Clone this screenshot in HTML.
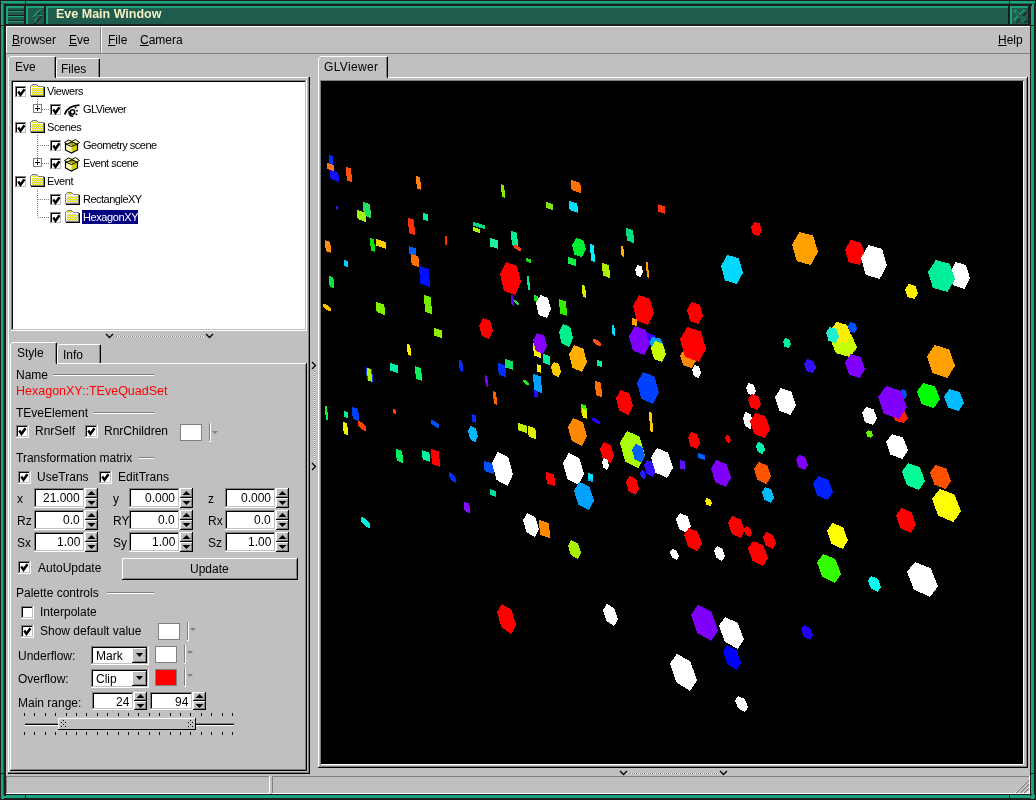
<!DOCTYPE html>
<html><head><meta charset="utf-8"><style>
html,body{margin:0;padding:0;}
body{width:1036px;height:800px;position:relative;overflow:hidden;background:#c0c0c0;font-family:"Liberation Sans",sans-serif;}
div,span,svg{position:absolute;}
.t{white-space:pre;line-height:1;will-change:transform;}
u{text-decoration:none;border-bottom:1px solid currentColor;}
</style></head><body>
<div style="left:0px;top:0px;width:1036px;height:800px;background:#18211e;"></div>
<div style="left:1px;top:1px;width:1034px;height:3px;background:#1fa27f;"></div>
<div style="left:1px;top:1px;width:3px;height:798px;background:#1fa27f;"></div>
<div style="left:1031px;top:1px;width:3px;height:798px;background:#1fa27f;"></div>
<div style="left:1px;top:795px;width:1034px;height:3px;background:#1fa27f;"></div>
<div style="left:4px;top:4px;width:1028px;height:2px;background:#18211e;"></div>
<div style="left:4px;top:4px;width:2px;height:792px;background:#18211e;"></div>
<div style="left:1030px;top:4px;width:1px;height:792px;background:#18211e;"></div>
<div style="left:4px;top:794px;width:1028px;height:1px;background:#18211e;"></div>
<div style="left:1px;top:3px;width:1034px;height:1px;background:#1a6e58;"></div>
<div style="left:3px;top:3px;width:1px;height:792px;background:#1a6e58;"></div>
<div style="left:25px;top:0px;width:1px;height:6px;background:#18211e;"></div>
<div style="left:25px;top:794px;width:1px;height:6px;background:#18211e;"></div>
<div style="left:1009px;top:0px;width:1px;height:6px;background:#18211e;"></div>
<div style="left:1009px;top:794px;width:1px;height:6px;background:#18211e;"></div>
<div style="left:0px;top:25px;width:6px;height:1px;background:#18211e;"></div>
<div style="left:1030px;top:25px;width:6px;height:1px;background:#18211e;"></div>
<div style="left:0px;top:773px;width:6px;height:1px;background:#18211e;"></div>
<div style="left:1030px;top:773px;width:6px;height:1px;background:#18211e;"></div>
<div style="left:6px;top:6px;width:20px;height:20px;background:#18211e;"></div>
<div style="left:6px;top:6px;width:18px;height:18px;background:#1f5c4e;"></div>
<div style="left:6px;top:6px;width:18px;height:2px;background:#1fa27f;"></div>
<div style="left:6px;top:6px;width:2px;height:18px;background:#1fa27f;"></div>
<div style="left:26px;top:6px;width:20px;height:20px;background:#18211e;"></div>
<div style="left:26px;top:6px;width:18px;height:18px;background:#1f5c4e;"></div>
<div style="left:26px;top:6px;width:18px;height:2px;background:#1fa27f;"></div>
<div style="left:26px;top:6px;width:2px;height:18px;background:#1fa27f;"></div>
<div style="left:46px;top:6px;width:964px;height:20px;background:#18211e;"></div>
<div style="left:46px;top:6px;width:962px;height:18px;background:#1f5c4e;"></div>
<div style="left:46px;top:6px;width:962px;height:2px;background:#1fa27f;"></div>
<div style="left:46px;top:6px;width:2px;height:18px;background:#1fa27f;"></div>
<div style="left:1010px;top:6px;width:20px;height:20px;background:#18211e;"></div>
<div style="left:1010px;top:6px;width:18px;height:18px;background:#1f5c4e;"></div>
<div style="left:1010px;top:6px;width:18px;height:2px;background:#1fa27f;"></div>
<div style="left:1010px;top:6px;width:2px;height:18px;background:#1fa27f;"></div>
<div style="left:8px;top:10px;width:16px;height:1px;background:#18211e;"></div>
<div style="left:8px;top:11px;width:16px;height:1px;background:#1fa27f;"></div>
<div style="left:8px;top:15px;width:16px;height:1px;background:#18211e;"></div>
<div style="left:8px;top:16px;width:16px;height:1px;background:#1fa27f;"></div>
<div style="left:8px;top:20px;width:16px;height:1px;background:#18211e;"></div>
<div style="left:8px;top:21px;width:16px;height:1px;background:#1fa27f;"></div>
<svg style="left:26px;top:6px" width="20" height="20"><path d="M6 11.5 L9.5 11.5 M13.5 4.5 L12.3 9.5 M15.5 10.5 L8 18" stroke="#18211e" stroke-width="1.1" fill="none"/><path d="M14.5 3.5 L6.5 11.5 M10.5 11.5 L8.8 16.5 M12.5 9.5 L16.5 9.5" stroke="#1fa27f" stroke-width="1.1" fill="none"/></svg>
<svg style="left:1010px;top:7px" width="20" height="20"><g fill="none" stroke-linecap="square"><path d="M6 5 L14.5 13.5 M14.5 5 L6 13.5" stroke="#18211e" stroke-width="3.2" transform="translate(0.6,0.6)"/><path d="M6 5 L14.5 13.5 M14.5 5 L6 13.5" stroke="#1fa27f" stroke-width="3.2" transform="translate(-0.6,-0.6)"/><path d="M6 5 L14.5 13.5 M14.5 5 L6 13.5" stroke="#1f5c4e" stroke-width="2"/></g></svg>
<span class="t" style="left:56px;top:8px;font-size:12.5px;color:#f4f0c4;font-weight:bold">Eve Main Window</span>
<div style="left:6px;top:26px;width:1024px;height:768px;background:#c0c0c0;"></div>
<div style="left:6px;top:26px;width:1024px;height:1px;background:#ffffff;"></div>
<div style="left:6px;top:26px;width:1px;height:27px;background:#ffffff;"></div>
<div style="left:6px;top:53px;width:1024px;height:1px;background:#808080;"></div>
<div style="left:100px;top:27px;width:1px;height:26px;background:#808080;"></div>
<div style="left:101px;top:27px;width:1px;height:26px;background:#ffffff;"></div>
<span class="t" style="left:12px;top:34px;font-size:12px;color:#000;"><span style="position:static;text-decoration:underline;text-underline-offset:1px">B</span>rowser</span>
<span class="t" style="left:69px;top:34px;font-size:12px;color:#000;"><span style="position:static;text-decoration:underline;text-underline-offset:1px">E</span>ve</span>
<span class="t" style="left:108px;top:34px;font-size:12px;color:#000;"><span style="position:static;text-decoration:underline;text-underline-offset:1px">F</span>ile</span>
<span class="t" style="left:140px;top:34px;font-size:12px;color:#000;"><span style="position:static;text-decoration:underline;text-underline-offset:1px">C</span>amera</span>
<span class="t" style="left:998px;top:34px;font-size:12px;color:#000;"><span style="position:static;text-decoration:underline;text-underline-offset:1px">H</span>elp</span>
<div style="left:8px;top:77px;width:1px;height:697px;background:#ffffff;"></div>
<div style="left:56px;top:58px;width:44px;height:20px;background:#c0c0c0;"></div>
<div style="left:58px;top:58px;width:41px;height:1px;background:#ffffff;"></div>
<div style="left:56px;top:60px;width:1px;height:18px;background:#ffffff;"></div>
<div style="left:57px;top:59px;width:1px;height:1px;background:#ffffff;"></div>
<div style="left:99px;top:59px;width:1px;height:19px;background:#000000;"></div>
<div style="left:98px;top:59px;width:1px;height:19px;background:#808080;"></div>
<span class="t" style="left:61px;top:63px;font-size:12px;color:#000;">Files</span>
<div style="left:8px;top:77px;width:301px;height:1px;background:#ffffff;"></div>
<div style="left:308px;top:77px;width:1px;height:697px;background:#808080;"></div>
<div style="left:309px;top:77px;width:1px;height:697px;background:#000000;"></div>
<div style="left:8px;top:773px;width:302px;height:1px;background:#000000;"></div>
<div style="left:8px;top:772px;width:301px;height:1px;background:#808080;"></div>
<div style="left:8px;top:56px;width:48px;height:22px;background:#c0c0c0;"></div>
<div style="left:10px;top:56px;width:45px;height:1px;background:#ffffff;"></div>
<div style="left:8px;top:58px;width:1px;height:20px;background:#ffffff;"></div>
<div style="left:9px;top:57px;width:1px;height:1px;background:#ffffff;"></div>
<div style="left:55px;top:57px;width:1px;height:21px;background:#000000;"></div>
<div style="left:54px;top:57px;width:1px;height:21px;background:#808080;"></div>
<span class="t" style="left:15px;top:61px;font-size:12px;color:#000;">Eve</span>
<div style="left:9px;top:77px;width:46px;height:1px;background:#c0c0c0;"></div>
<div style="left:11px;top:80px;width:296px;height:251px;background:#ffffff;"></div>
<div style="left:11px;top:80px;width:295px;height:1px;background:#808080;"></div>
<div style="left:11px;top:80px;width:1px;height:250px;background:#808080;"></div>
<div style="left:12px;top:81px;width:293px;height:1px;background:#000000;"></div>
<div style="left:12px;top:81px;width:1px;height:248px;background:#000000;"></div>
<div style="left:11px;top:330px;width:296px;height:1px;background:#ffffff;"></div>
<div style="left:306px;top:80px;width:1px;height:251px;background:#ffffff;"></div>
<div style="left:12px;top:329px;width:294px;height:1px;background:#c0c0c0;"></div>
<div style="left:305px;top:81px;width:1px;height:249px;background:#c0c0c0;"></div>
<div style="left:15px;top:86px;width:12px;height:12px;background:#ffffff;"></div>
<div style="left:15px;top:86px;width:11px;height:1px;background:#808080;"></div>
<div style="left:15px;top:86px;width:1px;height:11px;background:#808080;"></div>
<div style="left:16px;top:87px;width:9px;height:1px;background:#000000;"></div>
<div style="left:16px;top:87px;width:1px;height:9px;background:#000000;"></div>
<div style="left:15px;top:97px;width:12px;height:1px;background:#ffffff;"></div>
<div style="left:26px;top:86px;width:1px;height:12px;background:#ffffff;"></div>
<div style="left:16px;top:96px;width:10px;height:1px;background:#c0c0c0;"></div>
<div style="left:25px;top:87px;width:1px;height:10px;background:#c0c0c0;"></div>
<svg style="left:15px;top:86px" width="12" height="12"><path d="M3.3 5.5 L5.5 8.8 L9.5 3.2" stroke="#000" stroke-width="2.4" fill="none"/></svg>
<svg style="left:30px;top:84px" width="16" height="14" shape-rendering="crispEdges"><defs><pattern id="ck" width="2" height="2" patternUnits="userSpaceOnUse"><rect width="2" height="2" fill="#c8c8b0"/><rect width="1" height="1" fill="#ffff00"/><rect x="1" y="1" width="1" height="1" fill="#ffff00"/></pattern></defs><rect x="2" y="0" width="5" height="1" fill="#808080"/><rect x="1" y="1" width="1" height="1" fill="#808080"/><rect x="7" y="1" width="1" height="1" fill="#808080"/><rect x="0" y="2" width="1" height="10" fill="#808080"/><rect x="8" y="2" width="6" height="1" fill="#808080"/><rect x="13" y="2" width="1" height="10" fill="#808080"/><rect x="0" y="11" width="14" height="1" fill="#808080"/><rect x="1" y="12" width="14" height="1" fill="#000"/><rect x="14" y="3" width="1" height="10" fill="#000"/><rect x="2" y="1" width="5" height="2" fill="url(#ck)"/><rect x="1" y="3" width="12" height="8" fill="#fff"/><rect x="2" y="4" width="11" height="7" fill="url(#ck)"/></svg>
<span class="t" style="left:47px;top:86px;font-size:11px;color:#000;letter-spacing:-0.4px">Viewers</span>
<div style="left:50px;top:104px;width:12px;height:12px;background:#ffffff;"></div>
<div style="left:50px;top:104px;width:11px;height:1px;background:#808080;"></div>
<div style="left:50px;top:104px;width:1px;height:11px;background:#808080;"></div>
<div style="left:51px;top:105px;width:9px;height:1px;background:#000000;"></div>
<div style="left:51px;top:105px;width:1px;height:9px;background:#000000;"></div>
<div style="left:50px;top:115px;width:12px;height:1px;background:#ffffff;"></div>
<div style="left:61px;top:104px;width:1px;height:12px;background:#ffffff;"></div>
<div style="left:51px;top:114px;width:10px;height:1px;background:#c0c0c0;"></div>
<div style="left:60px;top:105px;width:1px;height:10px;background:#c0c0c0;"></div>
<svg style="left:50px;top:104px" width="12" height="12"><path d="M3.3 5.5 L5.5 8.8 L9.5 3.2" stroke="#000" stroke-width="2.4" fill="none"/></svg>
<svg style="left:64px;top:104px" width="17" height="15"><path d="M0.6 10.5 Q4 1.5 15.5 1.2" stroke="#000" stroke-width="1.7" fill="none"/><circle cx="8.5" cy="8" r="2.2" stroke="#000" stroke-width="1.5" fill="#fff"/><path d="M5 7 Q4.6 12.3 9.3 12.3" stroke="#000" stroke-width="1.4" fill="none"/><rect x="10.7" y="2.8" width="1.6" height="1.6" fill="#000"/><rect x="12.2" y="5.9" width="1.6" height="1.6" fill="#000"/><rect x="11.6" y="9.5" width="1.6" height="1.6" fill="#000"/></svg>
<span class="t" style="left:83px;top:104px;font-size:11px;color:#000;letter-spacing:-0.5px">GLViewer</span>
<div style="left:38px;top:109px;width:11px;height:1px;background:repeating-linear-gradient(90deg,#808080 0 1px,transparent 1px 2px)"></div>
<div style="left:33px;top:104px;width:9px;height:9px;background:#808080;"></div>
<div style="left:34px;top:105px;width:7px;height:7px;background:#ffffff;"></div>
<div style="left:35px;top:108px;width:5px;height:1px;background:#000000;"></div>
<div style="left:37px;top:106px;width:1px;height:5px;background:#000000;"></div>
<div style="left:15px;top:122px;width:12px;height:12px;background:#ffffff;"></div>
<div style="left:15px;top:122px;width:11px;height:1px;background:#808080;"></div>
<div style="left:15px;top:122px;width:1px;height:11px;background:#808080;"></div>
<div style="left:16px;top:123px;width:9px;height:1px;background:#000000;"></div>
<div style="left:16px;top:123px;width:1px;height:9px;background:#000000;"></div>
<div style="left:15px;top:133px;width:12px;height:1px;background:#ffffff;"></div>
<div style="left:26px;top:122px;width:1px;height:12px;background:#ffffff;"></div>
<div style="left:16px;top:132px;width:10px;height:1px;background:#c0c0c0;"></div>
<div style="left:25px;top:123px;width:1px;height:10px;background:#c0c0c0;"></div>
<svg style="left:15px;top:122px" width="12" height="12"><path d="M3.3 5.5 L5.5 8.8 L9.5 3.2" stroke="#000" stroke-width="2.4" fill="none"/></svg>
<svg style="left:30px;top:120px" width="16" height="14" shape-rendering="crispEdges"><defs><pattern id="ck" width="2" height="2" patternUnits="userSpaceOnUse"><rect width="2" height="2" fill="#c8c8b0"/><rect width="1" height="1" fill="#ffff00"/><rect x="1" y="1" width="1" height="1" fill="#ffff00"/></pattern></defs><rect x="2" y="0" width="5" height="1" fill="#808080"/><rect x="1" y="1" width="1" height="1" fill="#808080"/><rect x="7" y="1" width="1" height="1" fill="#808080"/><rect x="0" y="2" width="1" height="10" fill="#808080"/><rect x="8" y="2" width="6" height="1" fill="#808080"/><rect x="13" y="2" width="1" height="10" fill="#808080"/><rect x="0" y="11" width="14" height="1" fill="#808080"/><rect x="1" y="12" width="14" height="1" fill="#000"/><rect x="14" y="3" width="1" height="10" fill="#000"/><rect x="2" y="1" width="5" height="2" fill="url(#ck)"/><rect x="1" y="3" width="12" height="8" fill="#fff"/><rect x="2" y="4" width="11" height="7" fill="url(#ck)"/></svg>
<span class="t" style="left:47px;top:122px;font-size:11px;color:#000;letter-spacing:-0.4px">Scenes</span>
<div style="left:50px;top:140px;width:12px;height:12px;background:#ffffff;"></div>
<div style="left:50px;top:140px;width:11px;height:1px;background:#808080;"></div>
<div style="left:50px;top:140px;width:1px;height:11px;background:#808080;"></div>
<div style="left:51px;top:141px;width:9px;height:1px;background:#000000;"></div>
<div style="left:51px;top:141px;width:1px;height:9px;background:#000000;"></div>
<div style="left:50px;top:151px;width:12px;height:1px;background:#ffffff;"></div>
<div style="left:61px;top:140px;width:1px;height:12px;background:#ffffff;"></div>
<div style="left:51px;top:150px;width:10px;height:1px;background:#c0c0c0;"></div>
<div style="left:60px;top:141px;width:1px;height:10px;background:#c0c0c0;"></div>
<svg style="left:50px;top:140px" width="12" height="12"><path d="M3.3 5.5 L5.5 8.8 L9.5 3.2" stroke="#000" stroke-width="2.4" fill="none"/></svg>
<svg style="left:64px;top:137px" width="17" height="17"><path d="M2 6 L8 3.5 L14 6 L8 8.5 Z" fill="#a0a000"/><path d="M1.5 6.5 L1.5 13 L7.5 16 L7.5 8.5 Z" fill="#ffffc0"/><path d="M7.5 8.5 L7.5 16 L13.5 13 L13.5 6.5 Z" fill="#d0d000"/><path d="M1.5 6 L1.5 13 L7.5 16 L13.5 13 L13.5 6" stroke="#000" stroke-width="1.2" fill="none"/><path d="M1.5 7 L7.5 9.5 L13.5 7" stroke="#000" stroke-width="1" fill="none"/><path d="M0.5 5.5 L4.5 3 L8 4.5 L11.5 2.5 L15.5 5.5 L13 7 L8 4.8 L3 7 Z" fill="#fff8b0" stroke="#000" stroke-width="1"/></svg>
<span class="t" style="left:83px;top:140px;font-size:11px;color:#000;letter-spacing:-0.5px">Geometry scene</span>
<div style="left:38px;top:145px;width:11px;height:1px;background:repeating-linear-gradient(90deg,#808080 0 1px,transparent 1px 2px)"></div>
<div style="left:50px;top:158px;width:12px;height:12px;background:#ffffff;"></div>
<div style="left:50px;top:158px;width:11px;height:1px;background:#808080;"></div>
<div style="left:50px;top:158px;width:1px;height:11px;background:#808080;"></div>
<div style="left:51px;top:159px;width:9px;height:1px;background:#000000;"></div>
<div style="left:51px;top:159px;width:1px;height:9px;background:#000000;"></div>
<div style="left:50px;top:169px;width:12px;height:1px;background:#ffffff;"></div>
<div style="left:61px;top:158px;width:1px;height:12px;background:#ffffff;"></div>
<div style="left:51px;top:168px;width:10px;height:1px;background:#c0c0c0;"></div>
<div style="left:60px;top:159px;width:1px;height:10px;background:#c0c0c0;"></div>
<svg style="left:50px;top:158px" width="12" height="12"><path d="M3.3 5.5 L5.5 8.8 L9.5 3.2" stroke="#000" stroke-width="2.4" fill="none"/></svg>
<svg style="left:64px;top:155px" width="17" height="17"><path d="M2 6 L8 3.5 L14 6 L8 8.5 Z" fill="#a0a000"/><path d="M1.5 6.5 L1.5 13 L7.5 16 L7.5 8.5 Z" fill="#ffffc0"/><path d="M7.5 8.5 L7.5 16 L13.5 13 L13.5 6.5 Z" fill="#d0d000"/><path d="M1.5 6 L1.5 13 L7.5 16 L13.5 13 L13.5 6" stroke="#000" stroke-width="1.2" fill="none"/><path d="M1.5 7 L7.5 9.5 L13.5 7" stroke="#000" stroke-width="1" fill="none"/><path d="M0.5 5.5 L4.5 3 L8 4.5 L11.5 2.5 L15.5 5.5 L13 7 L8 4.8 L3 7 Z" fill="#fff8b0" stroke="#000" stroke-width="1"/></svg>
<span class="t" style="left:83px;top:158px;font-size:11px;color:#000;letter-spacing:-0.5px">Event scene</span>
<div style="left:38px;top:163px;width:11px;height:1px;background:repeating-linear-gradient(90deg,#808080 0 1px,transparent 1px 2px)"></div>
<div style="left:33px;top:158px;width:9px;height:9px;background:#808080;"></div>
<div style="left:34px;top:159px;width:7px;height:7px;background:#ffffff;"></div>
<div style="left:35px;top:162px;width:5px;height:1px;background:#000000;"></div>
<div style="left:37px;top:160px;width:1px;height:5px;background:#000000;"></div>
<div style="left:15px;top:176px;width:12px;height:12px;background:#ffffff;"></div>
<div style="left:15px;top:176px;width:11px;height:1px;background:#808080;"></div>
<div style="left:15px;top:176px;width:1px;height:11px;background:#808080;"></div>
<div style="left:16px;top:177px;width:9px;height:1px;background:#000000;"></div>
<div style="left:16px;top:177px;width:1px;height:9px;background:#000000;"></div>
<div style="left:15px;top:187px;width:12px;height:1px;background:#ffffff;"></div>
<div style="left:26px;top:176px;width:1px;height:12px;background:#ffffff;"></div>
<div style="left:16px;top:186px;width:10px;height:1px;background:#c0c0c0;"></div>
<div style="left:25px;top:177px;width:1px;height:10px;background:#c0c0c0;"></div>
<svg style="left:15px;top:176px" width="12" height="12"><path d="M3.3 5.5 L5.5 8.8 L9.5 3.2" stroke="#000" stroke-width="2.4" fill="none"/></svg>
<svg style="left:30px;top:174px" width="16" height="14" shape-rendering="crispEdges"><defs><pattern id="ck" width="2" height="2" patternUnits="userSpaceOnUse"><rect width="2" height="2" fill="#c8c8b0"/><rect width="1" height="1" fill="#ffff00"/><rect x="1" y="1" width="1" height="1" fill="#ffff00"/></pattern></defs><rect x="2" y="0" width="5" height="1" fill="#808080"/><rect x="1" y="1" width="1" height="1" fill="#808080"/><rect x="7" y="1" width="1" height="1" fill="#808080"/><rect x="0" y="2" width="1" height="10" fill="#808080"/><rect x="8" y="2" width="6" height="1" fill="#808080"/><rect x="13" y="2" width="1" height="10" fill="#808080"/><rect x="0" y="11" width="14" height="1" fill="#808080"/><rect x="1" y="12" width="14" height="1" fill="#000"/><rect x="14" y="3" width="1" height="10" fill="#000"/><rect x="2" y="1" width="5" height="2" fill="url(#ck)"/><rect x="1" y="3" width="12" height="8" fill="#fff"/><rect x="2" y="4" width="11" height="7" fill="url(#ck)"/></svg>
<span class="t" style="left:47px;top:176px;font-size:11px;color:#000;letter-spacing:-0.4px">Event</span>
<div style="left:50px;top:194px;width:12px;height:12px;background:#ffffff;"></div>
<div style="left:50px;top:194px;width:11px;height:1px;background:#808080;"></div>
<div style="left:50px;top:194px;width:1px;height:11px;background:#808080;"></div>
<div style="left:51px;top:195px;width:9px;height:1px;background:#000000;"></div>
<div style="left:51px;top:195px;width:1px;height:9px;background:#000000;"></div>
<div style="left:50px;top:205px;width:12px;height:1px;background:#ffffff;"></div>
<div style="left:61px;top:194px;width:1px;height:12px;background:#ffffff;"></div>
<div style="left:51px;top:204px;width:10px;height:1px;background:#c0c0c0;"></div>
<div style="left:60px;top:195px;width:1px;height:10px;background:#c0c0c0;"></div>
<svg style="left:50px;top:194px" width="12" height="12"><path d="M3.3 5.5 L5.5 8.8 L9.5 3.2" stroke="#000" stroke-width="2.4" fill="none"/></svg>
<svg style="left:65px;top:192px" width="16" height="14" shape-rendering="crispEdges"><defs><pattern id="ck" width="2" height="2" patternUnits="userSpaceOnUse"><rect width="2" height="2" fill="#c8c8b0"/><rect width="1" height="1" fill="#ffff00"/><rect x="1" y="1" width="1" height="1" fill="#ffff00"/></pattern></defs><rect x="2" y="0" width="5" height="1" fill="#808080"/><rect x="1" y="1" width="1" height="1" fill="#808080"/><rect x="7" y="1" width="1" height="1" fill="#808080"/><rect x="0" y="2" width="1" height="10" fill="#808080"/><rect x="8" y="2" width="6" height="1" fill="#808080"/><rect x="13" y="2" width="1" height="10" fill="#808080"/><rect x="0" y="11" width="14" height="1" fill="#808080"/><rect x="1" y="12" width="14" height="1" fill="#000"/><rect x="14" y="3" width="1" height="10" fill="#000"/><rect x="2" y="1" width="5" height="2" fill="url(#ck)"/><rect x="1" y="3" width="12" height="8" fill="#fff"/><rect x="2" y="4" width="11" height="7" fill="url(#ck)"/></svg>
<span class="t" style="left:83px;top:194px;font-size:11px;color:#000;letter-spacing:-0.5px">RectangleXY</span>
<div style="left:38px;top:199px;width:11px;height:1px;background:repeating-linear-gradient(90deg,#808080 0 1px,transparent 1px 2px)"></div>
<div style="left:50px;top:212px;width:12px;height:12px;background:#ffffff;"></div>
<div style="left:50px;top:212px;width:11px;height:1px;background:#808080;"></div>
<div style="left:50px;top:212px;width:1px;height:11px;background:#808080;"></div>
<div style="left:51px;top:213px;width:9px;height:1px;background:#000000;"></div>
<div style="left:51px;top:213px;width:1px;height:9px;background:#000000;"></div>
<div style="left:50px;top:223px;width:12px;height:1px;background:#ffffff;"></div>
<div style="left:61px;top:212px;width:1px;height:12px;background:#ffffff;"></div>
<div style="left:51px;top:222px;width:10px;height:1px;background:#c0c0c0;"></div>
<div style="left:60px;top:213px;width:1px;height:10px;background:#c0c0c0;"></div>
<svg style="left:50px;top:212px" width="12" height="12"><path d="M3.3 5.5 L5.5 8.8 L9.5 3.2" stroke="#000" stroke-width="2.4" fill="none"/></svg>
<svg style="left:65px;top:210px" width="16" height="14" shape-rendering="crispEdges"><defs><pattern id="ck" width="2" height="2" patternUnits="userSpaceOnUse"><rect width="2" height="2" fill="#c8c8b0"/><rect width="1" height="1" fill="#ffff00"/><rect x="1" y="1" width="1" height="1" fill="#ffff00"/></pattern></defs><rect x="2" y="0" width="5" height="1" fill="#808080"/><rect x="1" y="1" width="1" height="1" fill="#808080"/><rect x="7" y="1" width="1" height="1" fill="#808080"/><rect x="0" y="2" width="1" height="10" fill="#808080"/><rect x="8" y="2" width="6" height="1" fill="#808080"/><rect x="13" y="2" width="1" height="10" fill="#808080"/><rect x="0" y="11" width="14" height="1" fill="#808080"/><rect x="1" y="12" width="14" height="1" fill="#000"/><rect x="14" y="3" width="1" height="10" fill="#000"/><rect x="2" y="1" width="5" height="2" fill="url(#ck)"/><rect x="1" y="3" width="12" height="8" fill="#fff"/><rect x="2" y="4" width="11" height="7" fill="url(#ck)"/></svg>
<div style="left:82px;top:210px;width:56px;height:14px;background:#000080;"></div>
<span class="t" style="left:83px;top:212px;font-size:11px;color:#fff;letter-spacing:-0.4px">HexagonXY</span>
<div style="left:38px;top:217px;width:11px;height:1px;background:repeating-linear-gradient(90deg,#808080 0 1px,transparent 1px 2px)"></div>
<div style="left:37px;top:99px;width:1px;height:10px;background:repeating-linear-gradient(180deg,#808080 0 1px,transparent 1px 2px)"></div>
<div style="left:37px;top:135px;width:1px;height:28px;background:repeating-linear-gradient(180deg,#808080 0 1px,transparent 1px 2px)"></div>
<div style="left:37px;top:189px;width:1px;height:28px;background:repeating-linear-gradient(180deg,#808080 0 1px,transparent 1px 2px)"></div>
<svg style="left:105px;top:333px" width="9" height="6"><path d="M1 1 L4.5 4.5 L8 1" stroke="#000" stroke-width="1.3" fill="none"/></svg>
<svg style="left:205px;top:333px" width="9" height="6"><path d="M1 1 L4.5 4.5 L8 1" stroke="#000" stroke-width="1.3" fill="none"/></svg>
<div style="left:116px;top:336px;width:88px;height:1px;background:repeating-linear-gradient(90deg,#808080 0 1px,#fff 1px 2px)"></div>
<div style="left:57px;top:344px;width:44px;height:20px;background:#c0c0c0;"></div>
<div style="left:59px;top:344px;width:41px;height:1px;background:#ffffff;"></div>
<div style="left:57px;top:346px;width:1px;height:18px;background:#ffffff;"></div>
<div style="left:58px;top:345px;width:1px;height:1px;background:#ffffff;"></div>
<div style="left:100px;top:345px;width:1px;height:19px;background:#000000;"></div>
<div style="left:99px;top:345px;width:1px;height:19px;background:#808080;"></div>
<span class="t" style="left:63px;top:349px;font-size:12px;color:#000;">Info</span>
<div style="left:10px;top:363px;width:297px;height:1px;background:#ffffff;"></div>
<div style="left:10px;top:363px;width:1px;height:408px;background:#ffffff;"></div>
<div style="left:306px;top:363px;width:1px;height:408px;background:#000000;"></div>
<div style="left:305px;top:364px;width:1px;height:406px;background:#808080;"></div>
<div style="left:10px;top:770px;width:297px;height:1px;background:#000000;"></div>
<div style="left:11px;top:769px;width:295px;height:1px;background:#808080;"></div>
<div style="left:10px;top:342px;width:47px;height:22px;background:#c0c0c0;"></div>
<div style="left:12px;top:342px;width:44px;height:1px;background:#ffffff;"></div>
<div style="left:10px;top:344px;width:1px;height:20px;background:#ffffff;"></div>
<div style="left:11px;top:343px;width:1px;height:1px;background:#ffffff;"></div>
<div style="left:56px;top:343px;width:1px;height:21px;background:#000000;"></div>
<div style="left:55px;top:343px;width:1px;height:21px;background:#808080;"></div>
<span class="t" style="left:17px;top:347px;font-size:12px;color:#000;">Style</span>
<div style="left:11px;top:363px;width:45px;height:1px;background:#c0c0c0;"></div>
<span class="t" style="left:16px;top:369px;font-size:12px;color:#000;">Name</span>
<div style="left:53px;top:374px;width:101px;height:1px;background:#808080;"></div>
<div style="left:53px;top:375px;width:101px;height:1px;background:#ffffff;"></div>
<span class="t" style="left:16px;top:385px;font-size:12.5px;color:#ff0000;">HexagonXY::TEveQuadSet</span>
<span class="t" style="left:16px;top:407px;font-size:12px;color:#000;">TEveElement</span>
<div style="left:94px;top:412px;width:60px;height:1px;background:#808080;"></div>
<div style="left:94px;top:413px;width:60px;height:1px;background:#ffffff;"></div>
<div style="left:16px;top:425px;width:13px;height:13px;background:#ffffff;"></div>
<div style="left:16px;top:425px;width:12px;height:1px;background:#808080;"></div>
<div style="left:16px;top:425px;width:1px;height:12px;background:#808080;"></div>
<div style="left:17px;top:426px;width:10px;height:1px;background:#000000;"></div>
<div style="left:17px;top:426px;width:1px;height:10px;background:#000000;"></div>
<div style="left:16px;top:437px;width:13px;height:1px;background:#ffffff;"></div>
<div style="left:28px;top:425px;width:1px;height:13px;background:#ffffff;"></div>
<div style="left:17px;top:436px;width:11px;height:1px;background:#c0c0c0;"></div>
<div style="left:27px;top:426px;width:1px;height:11px;background:#c0c0c0;"></div>
<svg style="left:16px;top:425px" width="13" height="13"><path d="M3.3 5.5 L5.5 8.8 L9.5 3.2" stroke="#000" stroke-width="2.4" fill="none"/></svg>
<span class="t" style="left:35px;top:425px;font-size:12px;color:#000;">RnrSelf</span>
<div style="left:85px;top:425px;width:13px;height:13px;background:#ffffff;"></div>
<div style="left:85px;top:425px;width:12px;height:1px;background:#808080;"></div>
<div style="left:85px;top:425px;width:1px;height:12px;background:#808080;"></div>
<div style="left:86px;top:426px;width:10px;height:1px;background:#000000;"></div>
<div style="left:86px;top:426px;width:1px;height:10px;background:#000000;"></div>
<div style="left:85px;top:437px;width:13px;height:1px;background:#ffffff;"></div>
<div style="left:97px;top:425px;width:1px;height:13px;background:#ffffff;"></div>
<div style="left:86px;top:436px;width:11px;height:1px;background:#c0c0c0;"></div>
<div style="left:96px;top:426px;width:1px;height:11px;background:#c0c0c0;"></div>
<svg style="left:85px;top:425px" width="13" height="13"><path d="M3.3 5.5 L5.5 8.8 L9.5 3.2" stroke="#000" stroke-width="2.4" fill="none"/></svg>
<span class="t" style="left:104px;top:425px;font-size:12px;color:#000;">RnrChildren</span>
<div style="left:180px;top:424px;width:22px;height:17px;background:#808080;"></div>
<div style="left:181px;top:425px;width:20px;height:15px;background:#ffffff;"></div>
<div style="left:209px;top:423px;width:1px;height:18px;background:#808080;"></div>
<div style="left:210px;top:423px;width:1px;height:18px;background:#ffffff;"></div>
<div style="left:209px;top:441px;width:2px;height:1px;background:#ffffff;"></div>
<svg style="left:212px;top:431px" width="6" height="4"><path d="M0 0 L6 0 L3 3Z" fill="#808080"/></svg>
<span class="t" style="left:16px;top:452px;font-size:12px;color:#000;">Transformation matrix</span>
<div style="left:138px;top:457px;width:16px;height:1px;background:#808080;"></div>
<div style="left:138px;top:458px;width:16px;height:1px;background:#ffffff;"></div>
<div style="left:18px;top:471px;width:13px;height:13px;background:#ffffff;"></div>
<div style="left:18px;top:471px;width:12px;height:1px;background:#808080;"></div>
<div style="left:18px;top:471px;width:1px;height:12px;background:#808080;"></div>
<div style="left:19px;top:472px;width:10px;height:1px;background:#000000;"></div>
<div style="left:19px;top:472px;width:1px;height:10px;background:#000000;"></div>
<div style="left:18px;top:483px;width:13px;height:1px;background:#ffffff;"></div>
<div style="left:30px;top:471px;width:1px;height:13px;background:#ffffff;"></div>
<div style="left:19px;top:482px;width:11px;height:1px;background:#c0c0c0;"></div>
<div style="left:29px;top:472px;width:1px;height:11px;background:#c0c0c0;"></div>
<svg style="left:18px;top:471px" width="13" height="13"><path d="M3.3 5.5 L5.5 8.8 L9.5 3.2" stroke="#000" stroke-width="2.4" fill="none"/></svg>
<span class="t" style="left:37px;top:471px;font-size:12px;color:#000;">UseTrans</span>
<div style="left:99px;top:471px;width:13px;height:13px;background:#ffffff;"></div>
<div style="left:99px;top:471px;width:12px;height:1px;background:#808080;"></div>
<div style="left:99px;top:471px;width:1px;height:12px;background:#808080;"></div>
<div style="left:100px;top:472px;width:10px;height:1px;background:#000000;"></div>
<div style="left:100px;top:472px;width:1px;height:10px;background:#000000;"></div>
<div style="left:99px;top:483px;width:13px;height:1px;background:#ffffff;"></div>
<div style="left:111px;top:471px;width:1px;height:13px;background:#ffffff;"></div>
<div style="left:100px;top:482px;width:11px;height:1px;background:#c0c0c0;"></div>
<div style="left:110px;top:472px;width:1px;height:11px;background:#c0c0c0;"></div>
<svg style="left:99px;top:471px" width="13" height="13"><path d="M3.3 5.5 L5.5 8.8 L9.5 3.2" stroke="#000" stroke-width="2.4" fill="none"/></svg>
<span class="t" style="left:118px;top:471px;font-size:12px;color:#000;">EditTrans</span>
<span class="t" style="left:17px;top:493px;font-size:12px;color:#000;">x</span>
<div style="left:34px;top:488px;width:51px;height:20px;background:#ffffff;"></div>
<div style="left:34px;top:488px;width:50px;height:1px;background:#808080;"></div>
<div style="left:34px;top:488px;width:1px;height:19px;background:#808080;"></div>
<div style="left:35px;top:489px;width:48px;height:1px;background:#000000;"></div>
<div style="left:35px;top:489px;width:1px;height:17px;background:#000000;"></div>
<div style="left:34px;top:507px;width:51px;height:1px;background:#ffffff;"></div>
<div style="left:84px;top:488px;width:1px;height:20px;background:#ffffff;"></div>
<div style="left:35px;top:506px;width:49px;height:1px;background:#c0c0c0;"></div>
<div style="left:83px;top:489px;width:1px;height:18px;background:#c0c0c0;"></div>
<span class="t" style="right:956px;top:492px;font-size:12px">21.000</span>
<div style="left:85px;top:488px;width:13px;height:10px;background:#c0c0c0;"></div>
<div style="left:85px;top:488px;width:12px;height:1px;background:#ffffff;"></div>
<div style="left:85px;top:488px;width:1px;height:9px;background:#ffffff;"></div>
<div style="left:86px;top:496px;width:11px;height:1px;background:#808080;"></div>
<div style="left:96px;top:489px;width:1px;height:8px;background:#808080;"></div>
<div style="left:85px;top:497px;width:13px;height:1px;background:#000000;"></div>
<div style="left:97px;top:488px;width:1px;height:10px;background:#000000;"></div>
<div style="left:85px;top:498px;width:13px;height:10px;background:#c0c0c0;"></div>
<div style="left:85px;top:498px;width:12px;height:1px;background:#ffffff;"></div>
<div style="left:85px;top:498px;width:1px;height:9px;background:#ffffff;"></div>
<div style="left:86px;top:506px;width:11px;height:1px;background:#808080;"></div>
<div style="left:96px;top:499px;width:1px;height:8px;background:#808080;"></div>
<div style="left:85px;top:507px;width:13px;height:1px;background:#000000;"></div>
<div style="left:97px;top:498px;width:1px;height:10px;background:#000000;"></div>
<svg style="left:85px;top:488px" width="13" height="20"><path d="M2.5 7 L10.5 7 L6.5 3Z" fill="#000"/><path d="M2.5 13 L10.5 13 L6.5 17Z" fill="#000"/></svg>
<span class="t" style="left:113px;top:493px;font-size:12px;color:#000;">y</span>
<div style="left:129px;top:488px;width:51px;height:20px;background:#ffffff;"></div>
<div style="left:129px;top:488px;width:50px;height:1px;background:#808080;"></div>
<div style="left:129px;top:488px;width:1px;height:19px;background:#808080;"></div>
<div style="left:130px;top:489px;width:48px;height:1px;background:#000000;"></div>
<div style="left:130px;top:489px;width:1px;height:17px;background:#000000;"></div>
<div style="left:129px;top:507px;width:51px;height:1px;background:#ffffff;"></div>
<div style="left:179px;top:488px;width:1px;height:20px;background:#ffffff;"></div>
<div style="left:130px;top:506px;width:49px;height:1px;background:#c0c0c0;"></div>
<div style="left:178px;top:489px;width:1px;height:18px;background:#c0c0c0;"></div>
<span class="t" style="right:861px;top:492px;font-size:12px">0.000</span>
<div style="left:180px;top:488px;width:13px;height:10px;background:#c0c0c0;"></div>
<div style="left:180px;top:488px;width:12px;height:1px;background:#ffffff;"></div>
<div style="left:180px;top:488px;width:1px;height:9px;background:#ffffff;"></div>
<div style="left:181px;top:496px;width:11px;height:1px;background:#808080;"></div>
<div style="left:191px;top:489px;width:1px;height:8px;background:#808080;"></div>
<div style="left:180px;top:497px;width:13px;height:1px;background:#000000;"></div>
<div style="left:192px;top:488px;width:1px;height:10px;background:#000000;"></div>
<div style="left:180px;top:498px;width:13px;height:10px;background:#c0c0c0;"></div>
<div style="left:180px;top:498px;width:12px;height:1px;background:#ffffff;"></div>
<div style="left:180px;top:498px;width:1px;height:9px;background:#ffffff;"></div>
<div style="left:181px;top:506px;width:11px;height:1px;background:#808080;"></div>
<div style="left:191px;top:499px;width:1px;height:8px;background:#808080;"></div>
<div style="left:180px;top:507px;width:13px;height:1px;background:#000000;"></div>
<div style="left:192px;top:498px;width:1px;height:10px;background:#000000;"></div>
<svg style="left:180px;top:488px" width="13" height="20"><path d="M2.5 7 L10.5 7 L6.5 3Z" fill="#000"/><path d="M2.5 13 L10.5 13 L6.5 17Z" fill="#000"/></svg>
<span class="t" style="left:208px;top:493px;font-size:12px;color:#000;">z</span>
<div style="left:225px;top:488px;width:51px;height:20px;background:#ffffff;"></div>
<div style="left:225px;top:488px;width:50px;height:1px;background:#808080;"></div>
<div style="left:225px;top:488px;width:1px;height:19px;background:#808080;"></div>
<div style="left:226px;top:489px;width:48px;height:1px;background:#000000;"></div>
<div style="left:226px;top:489px;width:1px;height:17px;background:#000000;"></div>
<div style="left:225px;top:507px;width:51px;height:1px;background:#ffffff;"></div>
<div style="left:275px;top:488px;width:1px;height:20px;background:#ffffff;"></div>
<div style="left:226px;top:506px;width:49px;height:1px;background:#c0c0c0;"></div>
<div style="left:274px;top:489px;width:1px;height:18px;background:#c0c0c0;"></div>
<span class="t" style="right:765px;top:492px;font-size:12px">0.000</span>
<div style="left:276px;top:488px;width:13px;height:10px;background:#c0c0c0;"></div>
<div style="left:276px;top:488px;width:12px;height:1px;background:#ffffff;"></div>
<div style="left:276px;top:488px;width:1px;height:9px;background:#ffffff;"></div>
<div style="left:277px;top:496px;width:11px;height:1px;background:#808080;"></div>
<div style="left:287px;top:489px;width:1px;height:8px;background:#808080;"></div>
<div style="left:276px;top:497px;width:13px;height:1px;background:#000000;"></div>
<div style="left:288px;top:488px;width:1px;height:10px;background:#000000;"></div>
<div style="left:276px;top:498px;width:13px;height:10px;background:#c0c0c0;"></div>
<div style="left:276px;top:498px;width:12px;height:1px;background:#ffffff;"></div>
<div style="left:276px;top:498px;width:1px;height:9px;background:#ffffff;"></div>
<div style="left:277px;top:506px;width:11px;height:1px;background:#808080;"></div>
<div style="left:287px;top:499px;width:1px;height:8px;background:#808080;"></div>
<div style="left:276px;top:507px;width:13px;height:1px;background:#000000;"></div>
<div style="left:288px;top:498px;width:1px;height:10px;background:#000000;"></div>
<svg style="left:276px;top:488px" width="13" height="20"><path d="M2.5 7 L10.5 7 L6.5 3Z" fill="#000"/><path d="M2.5 13 L10.5 13 L6.5 17Z" fill="#000"/></svg>
<span class="t" style="left:17px;top:515px;font-size:12px;color:#000;">Rz</span>
<div style="left:34px;top:510px;width:51px;height:20px;background:#ffffff;"></div>
<div style="left:34px;top:510px;width:50px;height:1px;background:#808080;"></div>
<div style="left:34px;top:510px;width:1px;height:19px;background:#808080;"></div>
<div style="left:35px;top:511px;width:48px;height:1px;background:#000000;"></div>
<div style="left:35px;top:511px;width:1px;height:17px;background:#000000;"></div>
<div style="left:34px;top:529px;width:51px;height:1px;background:#ffffff;"></div>
<div style="left:84px;top:510px;width:1px;height:20px;background:#ffffff;"></div>
<div style="left:35px;top:528px;width:49px;height:1px;background:#c0c0c0;"></div>
<div style="left:83px;top:511px;width:1px;height:18px;background:#c0c0c0;"></div>
<span class="t" style="right:956px;top:514px;font-size:12px">0.0</span>
<div style="left:85px;top:510px;width:13px;height:10px;background:#c0c0c0;"></div>
<div style="left:85px;top:510px;width:12px;height:1px;background:#ffffff;"></div>
<div style="left:85px;top:510px;width:1px;height:9px;background:#ffffff;"></div>
<div style="left:86px;top:518px;width:11px;height:1px;background:#808080;"></div>
<div style="left:96px;top:511px;width:1px;height:8px;background:#808080;"></div>
<div style="left:85px;top:519px;width:13px;height:1px;background:#000000;"></div>
<div style="left:97px;top:510px;width:1px;height:10px;background:#000000;"></div>
<div style="left:85px;top:520px;width:13px;height:10px;background:#c0c0c0;"></div>
<div style="left:85px;top:520px;width:12px;height:1px;background:#ffffff;"></div>
<div style="left:85px;top:520px;width:1px;height:9px;background:#ffffff;"></div>
<div style="left:86px;top:528px;width:11px;height:1px;background:#808080;"></div>
<div style="left:96px;top:521px;width:1px;height:8px;background:#808080;"></div>
<div style="left:85px;top:529px;width:13px;height:1px;background:#000000;"></div>
<div style="left:97px;top:520px;width:1px;height:10px;background:#000000;"></div>
<svg style="left:85px;top:510px" width="13" height="20"><path d="M2.5 7 L10.5 7 L6.5 3Z" fill="#000"/><path d="M2.5 13 L10.5 13 L6.5 17Z" fill="#000"/></svg>
<span class="t" style="left:113px;top:515px;font-size:12px;color:#000;">RY</span>
<div style="left:129px;top:510px;width:51px;height:20px;background:#ffffff;"></div>
<div style="left:129px;top:510px;width:50px;height:1px;background:#808080;"></div>
<div style="left:129px;top:510px;width:1px;height:19px;background:#808080;"></div>
<div style="left:130px;top:511px;width:48px;height:1px;background:#000000;"></div>
<div style="left:130px;top:511px;width:1px;height:17px;background:#000000;"></div>
<div style="left:129px;top:529px;width:51px;height:1px;background:#ffffff;"></div>
<div style="left:179px;top:510px;width:1px;height:20px;background:#ffffff;"></div>
<div style="left:130px;top:528px;width:49px;height:1px;background:#c0c0c0;"></div>
<div style="left:178px;top:511px;width:1px;height:18px;background:#c0c0c0;"></div>
<span class="t" style="right:861px;top:514px;font-size:12px">0.0</span>
<div style="left:180px;top:510px;width:13px;height:10px;background:#c0c0c0;"></div>
<div style="left:180px;top:510px;width:12px;height:1px;background:#ffffff;"></div>
<div style="left:180px;top:510px;width:1px;height:9px;background:#ffffff;"></div>
<div style="left:181px;top:518px;width:11px;height:1px;background:#808080;"></div>
<div style="left:191px;top:511px;width:1px;height:8px;background:#808080;"></div>
<div style="left:180px;top:519px;width:13px;height:1px;background:#000000;"></div>
<div style="left:192px;top:510px;width:1px;height:10px;background:#000000;"></div>
<div style="left:180px;top:520px;width:13px;height:10px;background:#c0c0c0;"></div>
<div style="left:180px;top:520px;width:12px;height:1px;background:#ffffff;"></div>
<div style="left:180px;top:520px;width:1px;height:9px;background:#ffffff;"></div>
<div style="left:181px;top:528px;width:11px;height:1px;background:#808080;"></div>
<div style="left:191px;top:521px;width:1px;height:8px;background:#808080;"></div>
<div style="left:180px;top:529px;width:13px;height:1px;background:#000000;"></div>
<div style="left:192px;top:520px;width:1px;height:10px;background:#000000;"></div>
<svg style="left:180px;top:510px" width="13" height="20"><path d="M2.5 7 L10.5 7 L6.5 3Z" fill="#000"/><path d="M2.5 13 L10.5 13 L6.5 17Z" fill="#000"/></svg>
<span class="t" style="left:208px;top:515px;font-size:12px;color:#000;">Rx</span>
<div style="left:225px;top:510px;width:51px;height:20px;background:#ffffff;"></div>
<div style="left:225px;top:510px;width:50px;height:1px;background:#808080;"></div>
<div style="left:225px;top:510px;width:1px;height:19px;background:#808080;"></div>
<div style="left:226px;top:511px;width:48px;height:1px;background:#000000;"></div>
<div style="left:226px;top:511px;width:1px;height:17px;background:#000000;"></div>
<div style="left:225px;top:529px;width:51px;height:1px;background:#ffffff;"></div>
<div style="left:275px;top:510px;width:1px;height:20px;background:#ffffff;"></div>
<div style="left:226px;top:528px;width:49px;height:1px;background:#c0c0c0;"></div>
<div style="left:274px;top:511px;width:1px;height:18px;background:#c0c0c0;"></div>
<span class="t" style="right:765px;top:514px;font-size:12px">0.0</span>
<div style="left:276px;top:510px;width:13px;height:10px;background:#c0c0c0;"></div>
<div style="left:276px;top:510px;width:12px;height:1px;background:#ffffff;"></div>
<div style="left:276px;top:510px;width:1px;height:9px;background:#ffffff;"></div>
<div style="left:277px;top:518px;width:11px;height:1px;background:#808080;"></div>
<div style="left:287px;top:511px;width:1px;height:8px;background:#808080;"></div>
<div style="left:276px;top:519px;width:13px;height:1px;background:#000000;"></div>
<div style="left:288px;top:510px;width:1px;height:10px;background:#000000;"></div>
<div style="left:276px;top:520px;width:13px;height:10px;background:#c0c0c0;"></div>
<div style="left:276px;top:520px;width:12px;height:1px;background:#ffffff;"></div>
<div style="left:276px;top:520px;width:1px;height:9px;background:#ffffff;"></div>
<div style="left:277px;top:528px;width:11px;height:1px;background:#808080;"></div>
<div style="left:287px;top:521px;width:1px;height:8px;background:#808080;"></div>
<div style="left:276px;top:529px;width:13px;height:1px;background:#000000;"></div>
<div style="left:288px;top:520px;width:1px;height:10px;background:#000000;"></div>
<svg style="left:276px;top:510px" width="13" height="20"><path d="M2.5 7 L10.5 7 L6.5 3Z" fill="#000"/><path d="M2.5 13 L10.5 13 L6.5 17Z" fill="#000"/></svg>
<span class="t" style="left:17px;top:537px;font-size:12px;color:#000;">Sx</span>
<div style="left:34px;top:532px;width:51px;height:20px;background:#ffffff;"></div>
<div style="left:34px;top:532px;width:50px;height:1px;background:#808080;"></div>
<div style="left:34px;top:532px;width:1px;height:19px;background:#808080;"></div>
<div style="left:35px;top:533px;width:48px;height:1px;background:#000000;"></div>
<div style="left:35px;top:533px;width:1px;height:17px;background:#000000;"></div>
<div style="left:34px;top:551px;width:51px;height:1px;background:#ffffff;"></div>
<div style="left:84px;top:532px;width:1px;height:20px;background:#ffffff;"></div>
<div style="left:35px;top:550px;width:49px;height:1px;background:#c0c0c0;"></div>
<div style="left:83px;top:533px;width:1px;height:18px;background:#c0c0c0;"></div>
<span class="t" style="right:956px;top:536px;font-size:12px">1.00</span>
<div style="left:85px;top:532px;width:13px;height:10px;background:#c0c0c0;"></div>
<div style="left:85px;top:532px;width:12px;height:1px;background:#ffffff;"></div>
<div style="left:85px;top:532px;width:1px;height:9px;background:#ffffff;"></div>
<div style="left:86px;top:540px;width:11px;height:1px;background:#808080;"></div>
<div style="left:96px;top:533px;width:1px;height:8px;background:#808080;"></div>
<div style="left:85px;top:541px;width:13px;height:1px;background:#000000;"></div>
<div style="left:97px;top:532px;width:1px;height:10px;background:#000000;"></div>
<div style="left:85px;top:542px;width:13px;height:10px;background:#c0c0c0;"></div>
<div style="left:85px;top:542px;width:12px;height:1px;background:#ffffff;"></div>
<div style="left:85px;top:542px;width:1px;height:9px;background:#ffffff;"></div>
<div style="left:86px;top:550px;width:11px;height:1px;background:#808080;"></div>
<div style="left:96px;top:543px;width:1px;height:8px;background:#808080;"></div>
<div style="left:85px;top:551px;width:13px;height:1px;background:#000000;"></div>
<div style="left:97px;top:542px;width:1px;height:10px;background:#000000;"></div>
<svg style="left:85px;top:532px" width="13" height="20"><path d="M2.5 7 L10.5 7 L6.5 3Z" fill="#000"/><path d="M2.5 13 L10.5 13 L6.5 17Z" fill="#000"/></svg>
<span class="t" style="left:113px;top:537px;font-size:12px;color:#000;">Sy</span>
<div style="left:129px;top:532px;width:51px;height:20px;background:#ffffff;"></div>
<div style="left:129px;top:532px;width:50px;height:1px;background:#808080;"></div>
<div style="left:129px;top:532px;width:1px;height:19px;background:#808080;"></div>
<div style="left:130px;top:533px;width:48px;height:1px;background:#000000;"></div>
<div style="left:130px;top:533px;width:1px;height:17px;background:#000000;"></div>
<div style="left:129px;top:551px;width:51px;height:1px;background:#ffffff;"></div>
<div style="left:179px;top:532px;width:1px;height:20px;background:#ffffff;"></div>
<div style="left:130px;top:550px;width:49px;height:1px;background:#c0c0c0;"></div>
<div style="left:178px;top:533px;width:1px;height:18px;background:#c0c0c0;"></div>
<span class="t" style="right:861px;top:536px;font-size:12px">1.00</span>
<div style="left:180px;top:532px;width:13px;height:10px;background:#c0c0c0;"></div>
<div style="left:180px;top:532px;width:12px;height:1px;background:#ffffff;"></div>
<div style="left:180px;top:532px;width:1px;height:9px;background:#ffffff;"></div>
<div style="left:181px;top:540px;width:11px;height:1px;background:#808080;"></div>
<div style="left:191px;top:533px;width:1px;height:8px;background:#808080;"></div>
<div style="left:180px;top:541px;width:13px;height:1px;background:#000000;"></div>
<div style="left:192px;top:532px;width:1px;height:10px;background:#000000;"></div>
<div style="left:180px;top:542px;width:13px;height:10px;background:#c0c0c0;"></div>
<div style="left:180px;top:542px;width:12px;height:1px;background:#ffffff;"></div>
<div style="left:180px;top:542px;width:1px;height:9px;background:#ffffff;"></div>
<div style="left:181px;top:550px;width:11px;height:1px;background:#808080;"></div>
<div style="left:191px;top:543px;width:1px;height:8px;background:#808080;"></div>
<div style="left:180px;top:551px;width:13px;height:1px;background:#000000;"></div>
<div style="left:192px;top:542px;width:1px;height:10px;background:#000000;"></div>
<svg style="left:180px;top:532px" width="13" height="20"><path d="M2.5 7 L10.5 7 L6.5 3Z" fill="#000"/><path d="M2.5 13 L10.5 13 L6.5 17Z" fill="#000"/></svg>
<span class="t" style="left:208px;top:537px;font-size:12px;color:#000;">Sz</span>
<div style="left:225px;top:532px;width:51px;height:20px;background:#ffffff;"></div>
<div style="left:225px;top:532px;width:50px;height:1px;background:#808080;"></div>
<div style="left:225px;top:532px;width:1px;height:19px;background:#808080;"></div>
<div style="left:226px;top:533px;width:48px;height:1px;background:#000000;"></div>
<div style="left:226px;top:533px;width:1px;height:17px;background:#000000;"></div>
<div style="left:225px;top:551px;width:51px;height:1px;background:#ffffff;"></div>
<div style="left:275px;top:532px;width:1px;height:20px;background:#ffffff;"></div>
<div style="left:226px;top:550px;width:49px;height:1px;background:#c0c0c0;"></div>
<div style="left:274px;top:533px;width:1px;height:18px;background:#c0c0c0;"></div>
<span class="t" style="right:765px;top:536px;font-size:12px">1.00</span>
<div style="left:276px;top:532px;width:13px;height:10px;background:#c0c0c0;"></div>
<div style="left:276px;top:532px;width:12px;height:1px;background:#ffffff;"></div>
<div style="left:276px;top:532px;width:1px;height:9px;background:#ffffff;"></div>
<div style="left:277px;top:540px;width:11px;height:1px;background:#808080;"></div>
<div style="left:287px;top:533px;width:1px;height:8px;background:#808080;"></div>
<div style="left:276px;top:541px;width:13px;height:1px;background:#000000;"></div>
<div style="left:288px;top:532px;width:1px;height:10px;background:#000000;"></div>
<div style="left:276px;top:542px;width:13px;height:10px;background:#c0c0c0;"></div>
<div style="left:276px;top:542px;width:12px;height:1px;background:#ffffff;"></div>
<div style="left:276px;top:542px;width:1px;height:9px;background:#ffffff;"></div>
<div style="left:277px;top:550px;width:11px;height:1px;background:#808080;"></div>
<div style="left:287px;top:543px;width:1px;height:8px;background:#808080;"></div>
<div style="left:276px;top:551px;width:13px;height:1px;background:#000000;"></div>
<div style="left:288px;top:542px;width:1px;height:10px;background:#000000;"></div>
<svg style="left:276px;top:532px" width="13" height="20"><path d="M2.5 7 L10.5 7 L6.5 3Z" fill="#000"/><path d="M2.5 13 L10.5 13 L6.5 17Z" fill="#000"/></svg>
<div style="left:18px;top:561px;width:13px;height:13px;background:#ffffff;"></div>
<div style="left:18px;top:561px;width:12px;height:1px;background:#808080;"></div>
<div style="left:18px;top:561px;width:1px;height:12px;background:#808080;"></div>
<div style="left:19px;top:562px;width:10px;height:1px;background:#000000;"></div>
<div style="left:19px;top:562px;width:1px;height:10px;background:#000000;"></div>
<div style="left:18px;top:573px;width:13px;height:1px;background:#ffffff;"></div>
<div style="left:30px;top:561px;width:1px;height:13px;background:#ffffff;"></div>
<div style="left:19px;top:572px;width:11px;height:1px;background:#c0c0c0;"></div>
<div style="left:29px;top:562px;width:1px;height:11px;background:#c0c0c0;"></div>
<svg style="left:18px;top:561px" width="13" height="13"><path d="M3.3 5.5 L5.5 8.8 L9.5 3.2" stroke="#000" stroke-width="2.4" fill="none"/></svg>
<span class="t" style="left:38px;top:562px;font-size:12px;color:#000;">AutoUpdate</span>
<div style="left:122px;top:558px;width:176px;height:22px;background:#c0c0c0;"></div>
<div style="left:122px;top:558px;width:175px;height:1px;background:#ffffff;"></div>
<div style="left:122px;top:558px;width:1px;height:21px;background:#ffffff;"></div>
<div style="left:123px;top:578px;width:174px;height:1px;background:#808080;"></div>
<div style="left:296px;top:559px;width:1px;height:20px;background:#808080;"></div>
<div style="left:122px;top:579px;width:176px;height:1px;background:#000000;"></div>
<div style="left:297px;top:558px;width:1px;height:22px;background:#000000;"></div>
<span class="t" style="left:190px;top:563px;font-size:12px;color:#000;">Update</span>
<span class="t" style="left:16px;top:587px;font-size:12px;color:#000;">Palette controls</span>
<div style="left:107px;top:592px;width:47px;height:1px;background:#808080;"></div>
<div style="left:107px;top:593px;width:47px;height:1px;background:#ffffff;"></div>
<div style="left:21px;top:606px;width:13px;height:13px;background:#ffffff;"></div>
<div style="left:21px;top:606px;width:12px;height:1px;background:#808080;"></div>
<div style="left:21px;top:606px;width:1px;height:12px;background:#808080;"></div>
<div style="left:22px;top:607px;width:10px;height:1px;background:#000000;"></div>
<div style="left:22px;top:607px;width:1px;height:10px;background:#000000;"></div>
<div style="left:21px;top:618px;width:13px;height:1px;background:#ffffff;"></div>
<div style="left:33px;top:606px;width:1px;height:13px;background:#ffffff;"></div>
<div style="left:22px;top:617px;width:11px;height:1px;background:#c0c0c0;"></div>
<div style="left:32px;top:607px;width:1px;height:11px;background:#c0c0c0;"></div>
<span class="t" style="left:40px;top:606px;font-size:12px;color:#000;">Interpolate</span>
<div style="left:21px;top:625px;width:13px;height:13px;background:#ffffff;"></div>
<div style="left:21px;top:625px;width:12px;height:1px;background:#808080;"></div>
<div style="left:21px;top:625px;width:1px;height:12px;background:#808080;"></div>
<div style="left:22px;top:626px;width:10px;height:1px;background:#000000;"></div>
<div style="left:22px;top:626px;width:1px;height:10px;background:#000000;"></div>
<div style="left:21px;top:637px;width:13px;height:1px;background:#ffffff;"></div>
<div style="left:33px;top:625px;width:1px;height:13px;background:#ffffff;"></div>
<div style="left:22px;top:636px;width:11px;height:1px;background:#c0c0c0;"></div>
<div style="left:32px;top:626px;width:1px;height:11px;background:#c0c0c0;"></div>
<svg style="left:21px;top:625px" width="13" height="13"><path d="M3.3 5.5 L5.5 8.8 L9.5 3.2" stroke="#000" stroke-width="2.4" fill="none"/></svg>
<span class="t" style="left:40px;top:625px;font-size:12px;color:#000;">Show default value</span>
<div style="left:158px;top:623px;width:22px;height:17px;background:#808080;"></div>
<div style="left:159px;top:624px;width:20px;height:15px;background:#ffffff;"></div>
<div style="left:187px;top:622px;width:1px;height:18px;background:#808080;"></div>
<div style="left:188px;top:622px;width:1px;height:18px;background:#ffffff;"></div>
<div style="left:187px;top:640px;width:2px;height:1px;background:#ffffff;"></div>
<svg style="left:190px;top:628px" width="6" height="4"><path d="M0 0 L6 0 L3 3Z" fill="#808080"/></svg>
<span class="t" style="left:18px;top:650px;font-size:12px;color:#000;">Underflow:</span>
<div style="left:91px;top:646px;width:58px;height:19px;background:#ffffff;"></div>
<div style="left:91px;top:646px;width:57px;height:1px;background:#808080;"></div>
<div style="left:91px;top:646px;width:1px;height:18px;background:#808080;"></div>
<div style="left:92px;top:647px;width:55px;height:1px;background:#000000;"></div>
<div style="left:92px;top:647px;width:1px;height:16px;background:#000000;"></div>
<div style="left:91px;top:664px;width:58px;height:1px;background:#ffffff;"></div>
<div style="left:148px;top:646px;width:1px;height:19px;background:#ffffff;"></div>
<div style="left:92px;top:663px;width:56px;height:1px;background:#c0c0c0;"></div>
<div style="left:147px;top:647px;width:1px;height:17px;background:#c0c0c0;"></div>
<span class="t" style="left:96px;top:650px;font-size:12px;color:#000;">Mark</span>
<div style="left:132px;top:648px;width:15px;height:15px;background:#c0c0c0;"></div>
<div style="left:132px;top:648px;width:14px;height:1px;background:#ffffff;"></div>
<div style="left:132px;top:648px;width:1px;height:14px;background:#ffffff;"></div>
<div style="left:133px;top:661px;width:13px;height:1px;background:#808080;"></div>
<div style="left:145px;top:649px;width:1px;height:13px;background:#808080;"></div>
<div style="left:132px;top:662px;width:15px;height:1px;background:#000000;"></div>
<div style="left:146px;top:648px;width:1px;height:15px;background:#000000;"></div>
<svg style="left:132px;top:648px" width="15" height="15"><path d="M4 5 L11 5 L7.5 9Z" fill="#000"/></svg>
<div style="left:155px;top:646px;width:22px;height:17px;background:#808080;"></div>
<div style="left:156px;top:647px;width:20px;height:15px;background:#ffffff;"></div>
<div style="left:184px;top:645px;width:1px;height:18px;background:#808080;"></div>
<div style="left:185px;top:645px;width:1px;height:18px;background:#ffffff;"></div>
<div style="left:184px;top:663px;width:2px;height:1px;background:#ffffff;"></div>
<svg style="left:187px;top:651px" width="6" height="4"><path d="M0 0 L6 0 L3 3Z" fill="#808080"/></svg>
<span class="t" style="left:18px;top:673px;font-size:12px;color:#000;">Overflow:</span>
<div style="left:91px;top:669px;width:58px;height:19px;background:#ffffff;"></div>
<div style="left:91px;top:669px;width:57px;height:1px;background:#808080;"></div>
<div style="left:91px;top:669px;width:1px;height:18px;background:#808080;"></div>
<div style="left:92px;top:670px;width:55px;height:1px;background:#000000;"></div>
<div style="left:92px;top:670px;width:1px;height:16px;background:#000000;"></div>
<div style="left:91px;top:687px;width:58px;height:1px;background:#ffffff;"></div>
<div style="left:148px;top:669px;width:1px;height:19px;background:#ffffff;"></div>
<div style="left:92px;top:686px;width:56px;height:1px;background:#c0c0c0;"></div>
<div style="left:147px;top:670px;width:1px;height:17px;background:#c0c0c0;"></div>
<span class="t" style="left:96px;top:673px;font-size:12px;color:#000;">Clip</span>
<div style="left:132px;top:671px;width:15px;height:15px;background:#c0c0c0;"></div>
<div style="left:132px;top:671px;width:14px;height:1px;background:#ffffff;"></div>
<div style="left:132px;top:671px;width:1px;height:14px;background:#ffffff;"></div>
<div style="left:133px;top:684px;width:13px;height:1px;background:#808080;"></div>
<div style="left:145px;top:672px;width:1px;height:13px;background:#808080;"></div>
<div style="left:132px;top:685px;width:15px;height:1px;background:#000000;"></div>
<div style="left:146px;top:671px;width:1px;height:15px;background:#000000;"></div>
<svg style="left:132px;top:671px" width="15" height="15"><path d="M4 5 L11 5 L7.5 9Z" fill="#000"/></svg>
<div style="left:155px;top:669px;width:22px;height:17px;background:#808080;"></div>
<div style="left:156px;top:670px;width:20px;height:15px;background:#ff0000;"></div>
<div style="left:184px;top:668px;width:1px;height:18px;background:#808080;"></div>
<div style="left:185px;top:668px;width:1px;height:18px;background:#ffffff;"></div>
<div style="left:184px;top:686px;width:2px;height:1px;background:#ffffff;"></div>
<svg style="left:187px;top:674px" width="6" height="4"><path d="M0 0 L6 0 L3 3Z" fill="#808080"/></svg>
<span class="t" style="left:18px;top:697px;font-size:12px;color:#000;">Main range:</span>
<div style="left:92px;top:692px;width:42px;height:18px;background:#ffffff;"></div>
<div style="left:92px;top:692px;width:41px;height:1px;background:#808080;"></div>
<div style="left:92px;top:692px;width:1px;height:17px;background:#808080;"></div>
<div style="left:93px;top:693px;width:39px;height:1px;background:#000000;"></div>
<div style="left:93px;top:693px;width:1px;height:15px;background:#000000;"></div>
<div style="left:92px;top:709px;width:42px;height:1px;background:#ffffff;"></div>
<div style="left:133px;top:692px;width:1px;height:18px;background:#ffffff;"></div>
<div style="left:93px;top:708px;width:40px;height:1px;background:#c0c0c0;"></div>
<div style="left:132px;top:693px;width:1px;height:16px;background:#c0c0c0;"></div>
<span class="t" style="right:907px;top:696px;font-size:12px">24</span>
<div style="left:134px;top:692px;width:13px;height:9px;background:#c0c0c0;"></div>
<div style="left:134px;top:692px;width:12px;height:1px;background:#ffffff;"></div>
<div style="left:134px;top:692px;width:1px;height:8px;background:#ffffff;"></div>
<div style="left:135px;top:699px;width:11px;height:1px;background:#808080;"></div>
<div style="left:145px;top:693px;width:1px;height:7px;background:#808080;"></div>
<div style="left:134px;top:700px;width:13px;height:1px;background:#000000;"></div>
<div style="left:146px;top:692px;width:1px;height:9px;background:#000000;"></div>
<div style="left:134px;top:701px;width:13px;height:9px;background:#c0c0c0;"></div>
<div style="left:134px;top:701px;width:12px;height:1px;background:#ffffff;"></div>
<div style="left:134px;top:701px;width:1px;height:8px;background:#ffffff;"></div>
<div style="left:135px;top:708px;width:11px;height:1px;background:#808080;"></div>
<div style="left:145px;top:702px;width:1px;height:7px;background:#808080;"></div>
<div style="left:134px;top:709px;width:13px;height:1px;background:#000000;"></div>
<div style="left:146px;top:701px;width:1px;height:9px;background:#000000;"></div>
<svg style="left:134px;top:692px" width="13" height="18"><path d="M2.5 6 L10.5 6 L6.5 2Z" fill="#000"/><path d="M2.5 12 L10.5 12 L6.5 16Z" fill="#000"/></svg>
<div style="left:150px;top:692px;width:43px;height:18px;background:#ffffff;"></div>
<div style="left:150px;top:692px;width:42px;height:1px;background:#808080;"></div>
<div style="left:150px;top:692px;width:1px;height:17px;background:#808080;"></div>
<div style="left:151px;top:693px;width:40px;height:1px;background:#000000;"></div>
<div style="left:151px;top:693px;width:1px;height:15px;background:#000000;"></div>
<div style="left:150px;top:709px;width:43px;height:1px;background:#ffffff;"></div>
<div style="left:192px;top:692px;width:1px;height:18px;background:#ffffff;"></div>
<div style="left:151px;top:708px;width:41px;height:1px;background:#c0c0c0;"></div>
<div style="left:191px;top:693px;width:1px;height:16px;background:#c0c0c0;"></div>
<span class="t" style="right:848px;top:696px;font-size:12px">94</span>
<div style="left:193px;top:692px;width:13px;height:9px;background:#c0c0c0;"></div>
<div style="left:193px;top:692px;width:12px;height:1px;background:#ffffff;"></div>
<div style="left:193px;top:692px;width:1px;height:8px;background:#ffffff;"></div>
<div style="left:194px;top:699px;width:11px;height:1px;background:#808080;"></div>
<div style="left:204px;top:693px;width:1px;height:7px;background:#808080;"></div>
<div style="left:193px;top:700px;width:13px;height:1px;background:#000000;"></div>
<div style="left:205px;top:692px;width:1px;height:9px;background:#000000;"></div>
<div style="left:193px;top:701px;width:13px;height:9px;background:#c0c0c0;"></div>
<div style="left:193px;top:701px;width:12px;height:1px;background:#ffffff;"></div>
<div style="left:193px;top:701px;width:1px;height:8px;background:#ffffff;"></div>
<div style="left:194px;top:708px;width:11px;height:1px;background:#808080;"></div>
<div style="left:204px;top:702px;width:1px;height:7px;background:#808080;"></div>
<div style="left:193px;top:709px;width:13px;height:1px;background:#000000;"></div>
<div style="left:205px;top:701px;width:1px;height:9px;background:#000000;"></div>
<svg style="left:193px;top:692px" width="13" height="18"><path d="M2.5 6 L10.5 6 L6.5 2Z" fill="#000"/><path d="M2.5 12 L10.5 12 L6.5 16Z" fill="#000"/></svg>
<div style="left:24px;top:713px;width:1px;height:3px;background:#000000;"></div>
<div style="left:24px;top:732px;width:1px;height:3px;background:#000000;"></div>
<div style="left:34px;top:713px;width:1px;height:3px;background:#000000;"></div>
<div style="left:34px;top:732px;width:1px;height:3px;background:#000000;"></div>
<div style="left:45px;top:713px;width:1px;height:3px;background:#000000;"></div>
<div style="left:45px;top:732px;width:1px;height:3px;background:#000000;"></div>
<div style="left:55px;top:713px;width:1px;height:3px;background:#000000;"></div>
<div style="left:55px;top:732px;width:1px;height:3px;background:#000000;"></div>
<div style="left:66px;top:713px;width:1px;height:3px;background:#000000;"></div>
<div style="left:66px;top:732px;width:1px;height:3px;background:#000000;"></div>
<div style="left:76px;top:713px;width:1px;height:3px;background:#000000;"></div>
<div style="left:76px;top:732px;width:1px;height:3px;background:#000000;"></div>
<div style="left:86px;top:713px;width:1px;height:3px;background:#000000;"></div>
<div style="left:86px;top:732px;width:1px;height:3px;background:#000000;"></div>
<div style="left:97px;top:713px;width:1px;height:3px;background:#000000;"></div>
<div style="left:97px;top:732px;width:1px;height:3px;background:#000000;"></div>
<div style="left:107px;top:713px;width:1px;height:3px;background:#000000;"></div>
<div style="left:107px;top:732px;width:1px;height:3px;background:#000000;"></div>
<div style="left:118px;top:713px;width:1px;height:3px;background:#000000;"></div>
<div style="left:118px;top:732px;width:1px;height:3px;background:#000000;"></div>
<div style="left:128px;top:713px;width:1px;height:3px;background:#000000;"></div>
<div style="left:128px;top:732px;width:1px;height:3px;background:#000000;"></div>
<div style="left:138px;top:713px;width:1px;height:3px;background:#000000;"></div>
<div style="left:138px;top:732px;width:1px;height:3px;background:#000000;"></div>
<div style="left:149px;top:713px;width:1px;height:3px;background:#000000;"></div>
<div style="left:149px;top:732px;width:1px;height:3px;background:#000000;"></div>
<div style="left:159px;top:713px;width:1px;height:3px;background:#000000;"></div>
<div style="left:159px;top:732px;width:1px;height:3px;background:#000000;"></div>
<div style="left:170px;top:713px;width:1px;height:3px;background:#000000;"></div>
<div style="left:170px;top:732px;width:1px;height:3px;background:#000000;"></div>
<div style="left:180px;top:713px;width:1px;height:3px;background:#000000;"></div>
<div style="left:180px;top:732px;width:1px;height:3px;background:#000000;"></div>
<div style="left:190px;top:713px;width:1px;height:3px;background:#000000;"></div>
<div style="left:190px;top:732px;width:1px;height:3px;background:#000000;"></div>
<div style="left:201px;top:713px;width:1px;height:3px;background:#000000;"></div>
<div style="left:201px;top:732px;width:1px;height:3px;background:#000000;"></div>
<div style="left:211px;top:713px;width:1px;height:3px;background:#000000;"></div>
<div style="left:211px;top:732px;width:1px;height:3px;background:#000000;"></div>
<div style="left:222px;top:713px;width:1px;height:3px;background:#000000;"></div>
<div style="left:222px;top:732px;width:1px;height:3px;background:#000000;"></div>
<div style="left:232px;top:713px;width:1px;height:3px;background:#000000;"></div>
<div style="left:232px;top:732px;width:1px;height:3px;background:#000000;"></div>
<div style="left:25px;top:723px;width:209px;height:1px;background:#808080;"></div>
<div style="left:25px;top:724px;width:209px;height:1px;background:#000000;"></div>
<div style="left:25px;top:725px;width:209px;height:1px;background:#ffffff;"></div>
<div style="left:58px;top:718px;width:138px;height:12px;background:#c0c0c0;"></div>
<div style="left:58px;top:718px;width:138px;height:1px;background:#ffffff;"></div>
<div style="left:58px;top:718px;width:1px;height:12px;background:#ffffff;"></div>
<div style="left:58px;top:729px;width:138px;height:1px;background:#000000;"></div>
<div style="left:195px;top:718px;width:1px;height:12px;background:#000000;"></div>
<div style="left:63px;top:720px;width:1px;height:1px;background:#000000;"></div>
<div style="left:61px;top:722px;width:1px;height:1px;background:#000000;"></div>
<div style="left:65px;top:722px;width:1px;height:1px;background:#000000;"></div>
<div style="left:63px;top:724px;width:1px;height:1px;background:#000000;"></div>
<div style="left:61px;top:726px;width:1px;height:1px;background:#000000;"></div>
<div style="left:65px;top:726px;width:1px;height:1px;background:#000000;"></div>
<div style="left:190px;top:720px;width:1px;height:1px;background:#000000;"></div>
<div style="left:188px;top:722px;width:1px;height:1px;background:#000000;"></div>
<div style="left:192px;top:722px;width:1px;height:1px;background:#000000;"></div>
<div style="left:190px;top:724px;width:1px;height:1px;background:#000000;"></div>
<div style="left:188px;top:726px;width:1px;height:1px;background:#000000;"></div>
<div style="left:192px;top:726px;width:1px;height:1px;background:#000000;"></div>
<svg style="left:311px;top:361px" width="6" height="9"><path d="M1 1 L4.5 4.5 L1 8" stroke="#000" stroke-width="1.3" fill="none"/></svg>
<svg style="left:311px;top:462px" width="6" height="9"><path d="M1 1 L4.5 4.5 L1 8" stroke="#000" stroke-width="1.3" fill="none"/></svg>
<div style="left:314px;top:371px;width:1px;height:90px;background:repeating-linear-gradient(180deg,#808080 0 1px,#fff 1px 2px)"></div>
<div style="left:318px;top:77px;width:710px;height:1px;background:#ffffff;"></div>
<div style="left:318px;top:77px;width:1px;height:691px;background:#ffffff;"></div>
<div style="left:1027px;top:77px;width:1px;height:691px;background:#000000;"></div>
<div style="left:1026px;top:78px;width:1px;height:689px;background:#808080;"></div>
<div style="left:318px;top:767px;width:710px;height:1px;background:#000000;"></div>
<div style="left:319px;top:766px;width:708px;height:1px;background:#808080;"></div>
<div style="left:318px;top:56px;width:70px;height:22px;background:#c0c0c0;"></div>
<div style="left:320px;top:56px;width:67px;height:1px;background:#ffffff;"></div>
<div style="left:318px;top:58px;width:1px;height:20px;background:#ffffff;"></div>
<div style="left:319px;top:57px;width:1px;height:1px;background:#ffffff;"></div>
<div style="left:387px;top:57px;width:1px;height:21px;background:#000000;"></div>
<div style="left:386px;top:57px;width:1px;height:21px;background:#808080;"></div>
<span class="t" style="left:324px;top:61px;font-size:12px;color:#000;"><span style="position:static;letter-spacing:0.35px">GLViewer</span></span>
<div style="left:319px;top:77px;width:68px;height:1px;background:#c0c0c0;"></div>
<div style="left:320px;top:80px;width:705px;height:686px;background:#c0c0c0;"></div>
<div style="left:320px;top:80px;width:704px;height:1px;background:#808080;"></div>
<div style="left:320px;top:80px;width:1px;height:685px;background:#808080;"></div>
<div style="left:1024px;top:80px;width:1px;height:686px;background:#c0c0c0;"></div>
<div style="left:320px;top:765px;width:705px;height:1px;background:#c0c0c0;"></div>
<div style="left:321px;top:81px;width:702px;height:683px;background:#000;"></div>
<div style="left:1023px;top:81px;width:1px;height:684px;background:#ffffff;"></div>
<div style="left:321px;top:764px;width:703px;height:1px;background:#ffffff;"></div>
<svg style="left:619px;top:770px" width="9" height="6"><path d="M1 1 L4.5 4.5 L8 1" stroke="#000" stroke-width="1.3" fill="none"/></svg>
<svg style="left:719px;top:770px" width="9" height="6"><path d="M1 1 L4.5 4.5 L8 1" stroke="#000" stroke-width="1.3" fill="none"/></svg>
<div style="left:630px;top:773px;width:88px;height:1px;background:repeating-linear-gradient(90deg,#808080 0 1px,#fff 1px 2px)"></div>
<div style="left:6px;top:776px;width:264px;height:18px;background:#c0c0c0;"></div>
<div style="left:6px;top:776px;width:264px;height:1px;background:#808080;"></div>
<div style="left:6px;top:776px;width:1px;height:18px;background:#808080;"></div>
<div style="left:6px;top:793px;width:264px;height:1px;background:#ffffff;"></div>
<div style="left:269px;top:776px;width:1px;height:18px;background:#ffffff;"></div>
<div style="left:272px;top:776px;width:758px;height:18px;background:#c0c0c0;"></div>
<div style="left:272px;top:776px;width:758px;height:1px;background:#808080;"></div>
<div style="left:272px;top:776px;width:1px;height:18px;background:#808080;"></div>
<div style="left:272px;top:793px;width:758px;height:1px;background:#ffffff;"></div>
<div style="left:1029px;top:776px;width:1px;height:18px;background:#ffffff;"></div>
<svg style="left:1014px;top:778px" width="16" height="16"><path d="M15 1 L1 15 M15 5 L5 15 M15 9 L9 15 M15 13 L13 15" stroke="#fff" stroke-width="1" fill="none"/><path d="M15 2 L2 15 M15 6 L6 15 M15 10 L10 15" stroke="#808080" stroke-width="1.2" fill="none"/></svg>
<svg style="left:321px;top:81px" width="702" height="683" shape-rendering="crispEdges"><polygon points="8.0,74.0 11.5,75.1 12.0,84.0 8.5,82.9" fill="#0030ff"/><polygon points="6.0,82.0 12.7,84.2 13.0,90.0 6.3,87.8" fill="#ff7020"/><polygon points="9.0,89.0 17.4,91.8 18.0,101.0 9.6,98.2" fill="#1010ff"/><polygon points="25.0,86.0 30.2,87.7 31.0,101.0 25.8,99.3" fill="#ff5010"/><polygon points="95.0,95.0 99.2,96.4 100.0,109.0 95.8,107.6" fill="#ff8010"/><polygon points="15.0,125.0 16.8,125.6 17.0,129.0 15.2,128.4" fill="#4010ff"/><polygon points="42.0,121.0 49.2,123.4 50.0,137.0 42.8,134.6" fill="#20e060"/><polygon points="36.0,129.0 44.4,131.8 45.0,141.0 36.6,138.2" fill="#a0f010"/><polygon points="87.0,137.0 93.1,139.0 94.0,154.0 87.9,152.0" fill="#ff3010"/><polygon points="102.0,132.0 106.6,133.5 107.0,140.0 102.4,138.5" fill="#00f0a0"/><polygon points="152.0,141.0 163.8,144.2 164.0,148.0 152.2,144.8" fill="#00e080"/><polygon points="152.0,146.0 158.8,148.2 159.0,152.0 152.2,149.8" fill="#a0ff00"/><polygon points="124.0,155.0 125.5,155.5 126.0,164.0 124.5,163.5" fill="#ff3000"/><polygon points="4.0,159.0 9.3,160.8 10.0,172.0 4.7,170.2" fill="#ff9010"/><polygon points="49.0,157.0 53.2,158.4 54.0,171.0 49.8,169.6" fill="#10e010"/><polygon points="55.0,158.0 64.6,161.2 65.0,168.0 55.4,164.8" fill="#ffd000"/><polygon points="88.0,165.0 94.5,167.2 95.0,175.0 88.5,172.8" fill="#0060ff"/><polygon points="90.0,173.0 97.4,175.4 98.0,186.0 90.6,183.6" fill="#ff7000"/><polygon points="180.0,103.0 183.2,104.1 184.0,117.0 180.8,115.9" fill="#80f000"/><polygon points="250.0,99.0 259.4,102.1 260.0,112.0 250.6,108.9" fill="#ff7000"/><polygon points="225.0,121.0 231.7,123.2 232.0,129.0 225.3,126.8" fill="#80e010"/><polygon points="248.0,120.0 256.4,122.8 257.0,132.0 248.6,129.2" fill="#00e0ff"/><polygon points="169.0,157.0 176.5,159.5 177.0,168.0 169.5,165.5" fill="#20f0a0"/><polygon points="190.0,150.0 196.2,152.0 197.0,166.0 190.8,164.0" fill="#00f090"/><polygon points="193.0,164.0 196.2,164.6 200.0,167.6 200.0,170.0 196.8,169.4 193.0,166.4" fill="#ff4010"/><polygon points="255.1,157.0 262.3,159.1 265.0,168.4 261.1,176.0 253.5,173.7 251.0,164.2" fill="#00ee30"/><polygon points="269.0,163.0 273.0,164.3 274.0,181.0 270.0,179.7" fill="#00f0ff"/><polygon points="300.0,165.0 302.4,165.8 303.0,176.0 300.6,175.2" fill="#ffb000"/><polygon points="305.0,147.0 312.2,149.4 313.0,162.0 305.8,159.6" fill="#00e080"/><polygon points="337.0,123.0 343.5,125.2 344.0,133.0 337.5,130.8" fill="#ff3010"/><polygon points="433.2,141.0 438.9,142.5 441.0,149.4 437.9,155.0 432.0,153.3 430.0,146.3" fill="#ff0000"/><polygon points="23.0,179.0 26.7,180.2 27.0,186.0 23.3,184.8" fill="#00d0ff"/><polygon points="98.0,185.0 107.9,188.3 109.0,206.0 99.1,202.7" fill="#0010ff"/><polygon points="8.0,195.0 12.4,196.4 13.0,207.0 8.6,205.6" fill="#10e040"/><polygon points="2.0,223.0 5.6,223.7 10.0,227.2 10.0,230.0 6.4,229.3 2.0,225.8" fill="#ffc000"/><polygon points="55.0,221.0 63.4,223.8 64.0,234.0 55.6,231.2" fill="#80f000"/><polygon points="103.0,214.0 110.0,216.3 111.0,233.0 104.0,230.7" fill="#70f000"/><polygon points="113.0,247.0 120.6,249.5 121.0,257.0 113.4,254.5" fill="#90f000"/><polygon points="86.0,263.0 89.3,264.1 90.0,275.0 86.7,273.9" fill="#ffee00"/><polygon points="138.0,279.0 141.3,280.1 142.0,291.0 138.7,289.9" fill="#0030ff"/><polygon points="205.0,177.0 209.8,178.6 210.0,182.0 205.2,180.4" fill="#20e020"/><polygon points="247.0,176.0 254.6,178.5 255.0,185.0 247.4,182.5" fill="#10f040"/><polygon points="281.0,182.0 288.2,184.4 289.0,197.0 281.8,194.6" fill="#b0f000"/><polygon points="185.0,181.0 195.9,184.8 200.0,201.1 194.2,214.0 182.9,209.8 179.0,193.3" fill="#ff0000"/><polygon points="206.0,195.0 208.2,195.7 209.0,209.0 206.8,208.3" fill="#00f0a0"/><polygon points="261.0,204.0 264.3,205.1 265.0,217.0 261.7,215.9" fill="#d8f000"/><polygon points="190.0,214.0 192.4,214.8 193.0,225.0 190.6,224.2" fill="#6000ff"/><polygon points="193.0,219.0 195.2,219.5 198.0,222.0 198.0,224.0 195.8,223.5 193.0,221.0" fill="#20e040"/><polygon points="213.0,214.0 216.7,215.2 217.0,221.0 213.3,219.8" fill="#20e020"/><polygon points="219.3,214.0 227.0,216.8 230.0,228.2 225.9,237.0 217.8,233.9 215.0,222.4" fill="#ffffff"/><polygon points="238.0,218.0 245.1,220.4 246.0,235.0 238.9,232.6" fill="#30f000"/><polygon points="311.0,237.0 315.6,238.5 316.0,245.0 311.4,243.5" fill="#ffa000"/><polygon points="162.0,237.0 169.2,239.6 172.0,250.1 168.2,258.0 160.7,255.0 158.0,244.5" fill="#ff0000"/><polygon points="291.0,244.0 293.4,244.8 294.0,255.0 291.6,254.2" fill="#00e0ff"/><polygon points="241.9,243.0 249.2,245.9 252.0,257.3 248.2,266.0 240.7,262.7 238.0,251.2" fill="#00f090"/><polygon points="212.0,262.0 219.2,264.4 220.0,277.0 212.8,274.6" fill="#ffee00"/><polygon points="215.9,252.0 223.1,254.7 226.0,265.1 222.2,273.0 214.7,269.9 212.0,259.4" fill="#8800ff"/><polygon points="272.0,258.0 275.6,258.7 280.0,262.2 280.0,265.0 276.4,264.3 272.0,260.8" fill="#ff5010"/><polygon points="276.0,279.0 280.7,280.5 281.0,286.0 276.3,284.5" fill="#00f0a0"/><polygon points="222.0,273.0 228.5,275.1 229.0,284.0 222.5,281.9" fill="#00f0a0"/><polygon points="316.3,184.0 320.5,185.4 322.0,191.3 319.8,196.0 315.5,194.5 314.0,188.5" fill="#ffffff"/><polygon points="325.0,181.0 327.1,181.7 328.0,197.0 325.9,196.3" fill="#ffa000"/><polygon points="406.3,174.0 417.8,177.3 422.0,191.6 415.9,203.0 404.0,199.4 400.0,184.9" fill="#00d8ff"/><polygon points="318.0,214.0 328.8,217.7 333.0,232.5 327.2,244.0 315.9,239.9 312.0,224.9" fill="#ff0000"/><polygon points="313.9,245.0 324.7,248.7 329.0,263.1 323.3,274.0 312.0,269.8 308.0,255.2" fill="#8000ff"/><polygon points="326.0,252.0 333.6,254.5 334.0,262.0 326.4,259.5" fill="#4000ff"/><polygon points="331.9,256.0 339.1,257.5 342.0,263.5 338.2,268.0 330.7,266.2 328.0,260.2" fill="#00a0ff"/><polygon points="334.2,260.0 341.9,262.7 345.0,273.2 340.9,281.0 332.9,277.9 330.0,267.3" fill="#c8ff00"/><polygon points="370.5,221.0 378.8,223.7 382.0,234.6 377.6,243.0 369.0,240.0 366.0,228.9" fill="#ff0000"/><polygon points="363.5,268.0 371.7,270.5 375.0,280.0 370.7,287.0 362.1,284.1 359.0,274.6" fill="#ff8800"/><polygon points="366.3,246.0 379.7,250.5 385.0,267.9 377.9,281.0 364.0,275.8 359.0,258.3" fill="#ff0000"/><polygon points="478.5,151.0 492.1,154.6 497.0,170.8 489.7,184.0 475.7,180.0 471.0,163.5" fill="#ffa000"/><polygon points="529.8,159.0 540.2,161.8 544.0,174.0 538.4,184.0 527.6,181.0 524.0,168.5" fill="#ff0000"/><polygon points="547.5,164.0 561.0,167.8 566.0,184.5 558.7,198.0 544.7,193.8 540.0,176.8" fill="#ffffff"/><polygon points="634.7,181.0 645.1,184.1 649.0,197.4 643.4,208.0 632.7,204.6 629.0,191.1" fill="#ffffff"/><polygon points="614.8,179.0 628.8,182.7 634.0,198.4 626.5,211.0 611.9,206.9 607.0,190.9" fill="#00ee99"/><polygon points="587.7,203.0 594.4,204.8 597.0,212.2 593.4,218.0 586.4,216.0 584.0,208.5" fill="#ffee00"/><polygon points="464.2,257.0 468.4,258.3 470.0,263.3 467.8,267.0 463.5,265.5 462.0,260.5" fill="#00ee99"/><polygon points="517.3,251.0 530.7,254.2 536.0,266.6 528.9,276.0 515.0,272.3 510.0,259.8" fill="#c8ff00"/><polygon points="515.6,241.0 526.0,243.7 530.0,254.1 524.5,262.0 513.8,259.0 510.0,248.5" fill="#ffee00"/><polygon points="508.7,246.0 515.4,248.0 518.0,256.0 514.4,262.0 507.5,259.7 505.0,251.7" fill="#20eed0"/><polygon points="529.5,241.0 534.2,242.4 536.0,247.8 533.5,252.0 528.7,250.4 527.0,244.9" fill="#0050ff"/><polygon points="486.3,278.0 492.5,279.9 495.0,286.8 491.7,292.0 485.3,289.9 483.0,282.8" fill="#3010ff"/><polygon points="529.6,273.0 539.9,276.2 544.0,288.2 538.6,297.0 527.9,293.3 524.0,281.3" fill="#8000ff"/><polygon points="613.8,264.0 628.2,268.4 634.0,284.8 626.4,297.0 611.4,292.0 606.0,275.4" fill="#ffa000"/><polygon points="45.0,286.0 51.2,288.1 52.0,301.0 45.8,298.9" fill="#1040ff"/><polygon points="46.0,287.0 50.2,288.4 51.0,301.0 46.8,299.6" fill="#a8f000"/><polygon points="69.0,282.0 76.6,284.5 77.0,292.0 69.4,289.5" fill="#00f0b0"/><polygon points="94.0,285.0 100.2,287.1 101.0,300.0 94.8,297.9" fill="#10f060"/><polygon points="4.0,325.0 6.2,325.7 7.0,339.0 4.8,338.3" fill="#10f040"/><polygon points="23.0,330.0 26.7,331.2 27.0,337.0 23.3,335.8" fill="#00f090"/><polygon points="31.0,326.0 37.3,328.1 38.0,340.0 31.7,337.9" fill="#0040ff"/><polygon points="37.0,340.0 40.6,341.0 45.0,346.0 45.0,350.0 41.4,349.0 37.0,344.0" fill="#ff4000"/><polygon points="22.0,341.0 26.3,342.4 27.0,354.0 22.7,352.6" fill="#f0f000"/><polygon points="72.0,328.0 74.8,328.9 75.0,333.0 72.2,332.1" fill="#ff4000"/><polygon points="110.0,339.0 113.6,339.8 118.0,343.8 118.0,347.0 114.4,346.2 110.0,342.2" fill="#0050ff"/><polygon points="151.0,333.0 154.5,334.2 155.0,342.0 151.5,340.8" fill="#0030ff"/><polygon points="149.7,345.0 154.8,347.3 157.0,355.4 154.3,361.0 149.0,358.2 147.0,350.2" fill="#00b8ff"/><polygon points="75.0,368.0 81.3,370.1 82.0,382.0 75.7,379.9" fill="#00f060"/><polygon points="101.0,369.0 108.4,371.5 109.0,381.0 101.6,378.5" fill="#00f0a0"/><polygon points="110.0,368.0 118.1,370.7 119.0,386.0 110.9,383.3" fill="#ff0000"/><polygon points="177.0,282.0 184.3,284.4 185.0,296.0 177.7,293.6" fill="#0030ff"/><polygon points="184.0,278.0 191.5,280.5 192.0,289.0 184.5,286.5" fill="#10e060"/><polygon points="164.0,294.0 166.3,294.8 167.0,306.0 164.7,305.2" fill="#8000ff"/><polygon points="172.0,310.0 175.2,311.1 176.0,324.0 172.8,322.9" fill="#ff6000"/><polygon points="216.0,283.0 219.5,284.2 220.0,292.0 216.5,290.8" fill="#f0f000"/><polygon points="232.8,281.0 237.9,283.0 240.0,290.5 237.3,296.0 231.9,293.7 230.0,286.2" fill="#ffcc00"/><polygon points="253.0,264.0 262.3,267.6 266.0,281.0 261.1,291.0 251.5,286.9 248.0,273.4" fill="#ffb000"/><polygon points="202.0,299.0 204.7,299.5 208.0,302.0 208.0,304.0 205.3,303.5 202.0,301.0" fill="#20f020"/><polygon points="212.0,293.0 220.0,295.6 221.0,312.0 213.0,309.4" fill="#00a0ff"/><polygon points="213.0,309.0 216.6,310.2 217.0,317.0 213.4,315.8" fill="#2010ff"/><polygon points="274.0,300.0 280.2,302.0 281.0,316.0 274.8,314.0" fill="#ff7000"/><polygon points="299.7,309.0 308.4,312.5 312.0,325.0 307.4,334.0 298.4,329.9 295.0,317.4" fill="#ff0000"/><polygon points="260.0,323.0 265.4,324.8 266.0,335.0 260.6,333.2" fill="#40f000"/><polygon points="261.0,327.0 265.4,328.5 266.0,338.0 261.6,336.5" fill="#e8f000"/><polygon points="271.0,337.0 274.6,337.6 279.0,340.6 279.0,343.0 275.4,342.4 271.0,339.4" fill="#2000ff"/><polygon points="197.0,342.0 205.6,344.8 206.0,352.0 197.4,349.2" fill="#c0f000"/><polygon points="207.0,345.0 214.4,347.4 215.0,358.0 207.6,355.6" fill="#e0f000"/><polygon points="252.2,337.0 261.9,341.1 266.0,355.2 260.9,365.0 250.9,360.2 247.0,346.1" fill="#ff8800"/><polygon points="282.8,361.0 289.9,364.2 293.0,374.8 289.3,382.0 281.9,378.3 279.0,367.7" fill="#ff0000"/><polygon points="282.9,377.0 286.4,378.8 288.0,384.9 286.2,389.0 282.4,386.8 281.0,380.8" fill="#ffffff"/><polygon points="163.0,380.0 172.4,383.1 173.0,393.0 163.6,389.9" fill="#0050ff"/><polygon points="373.5,284.0 378.1,285.7 380.0,292.2 377.6,297.0 372.8,295.0 371.0,288.5" fill="#ffffff"/><polygon points="322.1,291.0 333.4,295.4 338.0,311.4 332.1,323.0 320.3,317.9 316.0,301.8" fill="#0040ff"/><polygon points="328.0,331.0 330.9,331.9 332.0,351.0 329.1,350.1" fill="#ffcc00"/><polygon points="305.8,350.0 318.5,355.5 324.0,374.2 317.4,387.0 304.1,380.4 299.0,361.8" fill="#aaff00"/><polygon points="314.5,363.0 321.1,365.9 324.0,375.5 320.6,382.0 313.7,378.6 311.0,369.1" fill="#0060ff"/><polygon points="320.6,389.0 323.7,390.4 325.0,395.0 323.4,398.0 320.2,396.3 319.0,391.8" fill="#2020ff"/><polygon points="326.2,379.0 332.3,381.6 335.0,390.2 331.8,396.0 325.5,392.9 323.0,384.3" fill="#3010ff"/><polygon points="335.9,367.0 347.1,371.6 352.0,386.8 346.2,397.0 334.5,391.6 330.0,376.5" fill="#ffffff"/><polygon points="359.0,379.0 363.5,380.5 364.0,389.0 359.5,387.5" fill="#6010ff"/><polygon points="370.3,351.0 376.4,353.5 379.0,362.1 375.8,368.0 369.4,365.0 367.0,356.5" fill="#ff0000"/><polygon points="377.0,372.0 383.7,374.2 384.0,379.0 377.3,376.8" fill="#0060ff"/><polygon points="405.6,354.0 408.7,355.2 410.0,359.2 408.4,362.0 405.2,360.6 404.0,356.6" fill="#ff0000"/><polygon points="427.8,302.0 432.9,303.8 435.0,310.3 432.3,315.0 427.0,312.9 425.0,306.4" fill="#ffffff"/><polygon points="430.6,313.0 437.2,315.2 440.0,323.3 436.5,329.0 429.6,326.4 427.0,318.4" fill="#ff0000"/><polygon points="424.7,331.0 429.8,333.4 432.0,342.0 429.3,348.0 424.0,345.1 422.0,336.6" fill="#ffffff"/><polygon points="434.4,332.0 444.7,335.6 449.0,348.2 443.7,357.0 433.0,352.7 429.0,340.2" fill="#ff0000"/><polygon points="459.8,307.0 470.5,310.8 475.0,324.3 469.4,334.0 458.2,329.6 454.0,316.0" fill="#ffffff"/><polygon points="437.4,361.0 442.0,362.8 444.0,368.9 441.6,373.0 436.8,370.9 435.0,364.8" fill="#00eeaa"/><polygon points="580.9,308.0 584.5,309.4 586.0,314.4 584.1,318.0 580.4,316.4 579.0,311.4" fill="#0050ff"/><polygon points="575.4,328.0 583.6,330.0 587.0,337.0 582.7,342.0 574.2,339.7 571.0,332.6" fill="#ff2000"/><polygon points="565.0,305.0 579.8,309.6 586.0,326.2 578.2,338.0 562.8,332.6 557.0,316.0" fill="#8000ff"/><polygon points="602.3,302.0 614.1,305.5 619.0,318.0 612.8,327.0 600.6,323.0 596.0,310.4" fill="#00ff00"/><polygon points="628.5,308.0 638.8,311.1 643.0,322.1 637.6,330.0 627.0,326.4 623.0,315.4" fill="#00bbff"/><polygon points="545.1,326.0 552.8,328.6 556.0,337.6 552.0,344.0 544.0,341.0 541.0,331.9" fill="#ffffff"/><polygon points="546.9,349.0 550.5,350.2 552.0,354.2 550.1,357.0 546.4,355.6 545.0,351.6" fill="#60f000"/><polygon points="570.9,353.0 582.2,356.7 587.0,369.4 581.2,378.0 569.5,373.6 565.0,361.0" fill="#ffffff"/><polygon points="478.2,374.0 484.3,376.3 487.0,383.9 483.8,389.0 477.5,386.3 475.0,378.7" fill="#8000ff"/><polygon points="128.0,391.0 131.2,392.1 135.0,397.6 135.0,402.0 131.8,400.9 128.0,395.4" fill="#0030ff"/><polygon points="143.0,421.0 148.4,422.8 149.0,432.0 143.6,430.2" fill="#8010ff"/><polygon points="40.0,436.0 44.0,437.1 49.0,442.6 49.0,447.0 45.0,445.9 40.0,440.4" fill="#00f0e0"/><polygon points="176.6,371.0 187.3,376.2 192.0,393.4 186.5,405.0 175.4,398.8 171.0,381.7" fill="#ffffff"/><polygon points="225.0,391.0 233.3,393.7 234.0,405.0 225.7,402.3" fill="#ff0000"/><polygon points="247.6,372.0 258.3,376.9 263.0,393.1 257.5,404.0 246.4,398.1 242.0,382.1" fill="#ffffff"/><polygon points="267.0,392.0 271.6,393.5 272.0,401.0 267.4,399.5" fill="#00b0ff"/><polygon points="267.0,392.0 271.7,393.5 272.0,399.0 267.3,397.5" fill="#00e0ff"/><polygon points="308.5,395.0 315.1,398.0 318.0,407.6 314.6,414.0 307.7,410.4 305.0,400.9" fill="#ff0000"/><polygon points="169.0,408.0 174.6,409.9 175.0,416.0 169.4,414.1" fill="#00e0a0"/><polygon points="258.3,401.0 268.5,405.5 273.0,419.7 267.8,429.0 257.2,423.7 253.0,409.6" fill="#00a0ff"/><polygon points="206.2,432.0 214.3,436.0 218.0,448.2 213.8,456.0 205.4,451.2 202.0,439.1" fill="#ffffff"/><polygon points="218.0,439.0 228.1,442.3 229.0,457.0 218.9,453.7" fill="#ff8800"/><polygon points="250.4,459.0 256.9,462.2 260.0,472.0 256.7,478.0 249.8,474.1 247.0,464.5" fill="#aaee00"/><polygon points="395.4,379.0 405.5,383.2 410.0,396.9 404.7,406.0 394.2,401.0 390.0,387.4" fill="#8000ff"/><polygon points="437.6,381.0 446.2,384.4 450.0,395.5 445.5,403.0 436.5,398.9 433.0,387.9" fill="#ff5500"/><polygon points="444.2,406.0 450.3,408.5 453.0,416.7 449.9,422.0 443.5,419.0 441.0,410.9" fill="#00bbff"/><polygon points="385.9,417.0 389.4,418.3 391.0,422.4 389.2,425.0 385.5,423.5 384.0,419.4" fill="#ffee00"/><polygon points="358.9,432.0 366.5,435.3 370.0,445.5 366.1,452.0 358.2,448.0 355.0,438.0" fill="#ffffff"/><polygon points="367.7,447.0 376.8,450.9 381.0,462.6 376.4,470.0 366.9,465.3 363.0,453.7" fill="#ff0000"/><polygon points="351.3,468.0 355.9,469.9 358.0,475.5 355.7,479.0 351.0,476.7 349.0,471.2" fill="#ffffff"/><polygon points="395.9,465.0 401.4,467.6 404.0,475.3 401.2,480.0 395.4,476.9 393.0,469.3" fill="#ffffff"/><polygon points="411.5,435.0 420.1,438.6 424.0,449.9 419.6,457.0 410.6,452.6 407.0,441.5" fill="#ff0000"/><polygon points="425.1,445.0 429.1,446.8 431.0,452.5 428.9,456.0 424.7,453.8 423.0,448.3" fill="#ff0000"/><polygon points="445.4,451.0 452.0,453.9 455.0,462.6 451.6,468.0 444.8,464.5 442.0,456.0" fill="#ff0000"/><polygon points="432.2,460.0 442.3,464.3 447.0,477.1 441.9,485.0 431.4,479.8 427.0,467.2" fill="#ff0000"/><polygon points="587.1,382.0 598.8,386.2 604.0,399.9 598.0,409.0 585.8,404.0 581.0,390.4" fill="#00ff99"/><polygon points="614.6,384.0 625.3,387.7 630.0,399.9 624.5,408.0 613.4,403.6 609.0,391.5" fill="#ff5000"/><polygon points="497.3,395.0 507.5,398.8 512.0,411.0 506.8,419.0 496.2,414.5 492.0,402.4" fill="#0020ff"/><polygon points="618.7,408.0 633.4,413.3 640.0,430.1 632.4,441.0 617.1,434.6 611.0,418.0" fill="#ffff00"/><polygon points="580.3,427.0 590.4,431.1 595.0,443.9 589.8,452.0 579.3,447.1 575.0,434.5" fill="#ff0000"/><polygon points="511.5,442.0 522.1,446.3 527.0,459.6 521.6,468.0 510.5,462.7 506.0,449.6" fill="#ffff00"/><polygon points="502.2,473.0 514.3,478.0 520.0,492.9 513.9,502.0 501.3,495.9 496.0,481.2" fill="#33ff00"/><polygon points="550.3,495.0 556.9,497.8 560.0,506.1 556.7,511.0 549.9,507.5 547.0,499.5" fill="#00ffee"/><polygon points="594.0,481.0 609.6,487.2 617.0,505.2 609.1,516.0 592.9,508.5 586.0,490.8" fill="#ffffff"/><polygon points="180.8,523.0 190.3,528.5 195.0,544.0 190.2,553.0 180.3,546.2 176.0,531.1" fill="#ff0000"/><polygon points="285.8,523.0 293.3,527.0 297.0,538.4 293.2,545.0 285.4,540.1 282.0,529.0" fill="#ffffff"/><polygon points="376.8,524.0 390.4,530.6 397.0,549.3 390.2,560.0 376.1,551.8 370.0,533.7" fill="#8000ff"/><polygon points="404.3,536.0 416.8,542.0 423.0,558.6 416.7,568.0 403.7,560.6 398.0,544.5" fill="#ffffff"/><polygon points="406.5,564.0 415.5,568.8 420.0,581.8 415.5,589.0 406.1,583.1 402.0,570.5" fill="#0000ff"/><polygon points="355.8,573.0 369.2,580.0 376.0,599.3 369.2,610.0 355.2,601.3 349.0,582.6" fill="#ffffff"/><polygon points="417.2,615.0 423.8,618.0 427.0,626.4 423.8,631.0 417.0,627.2 414.0,619.2" fill="#ffffff"/><polygon points="483.0,544.0 489.0,546.8 492.0,554.6 489.0,559.0 482.7,555.6 480.0,548.0" fill="#2000ff"/></svg>
</body></html>
